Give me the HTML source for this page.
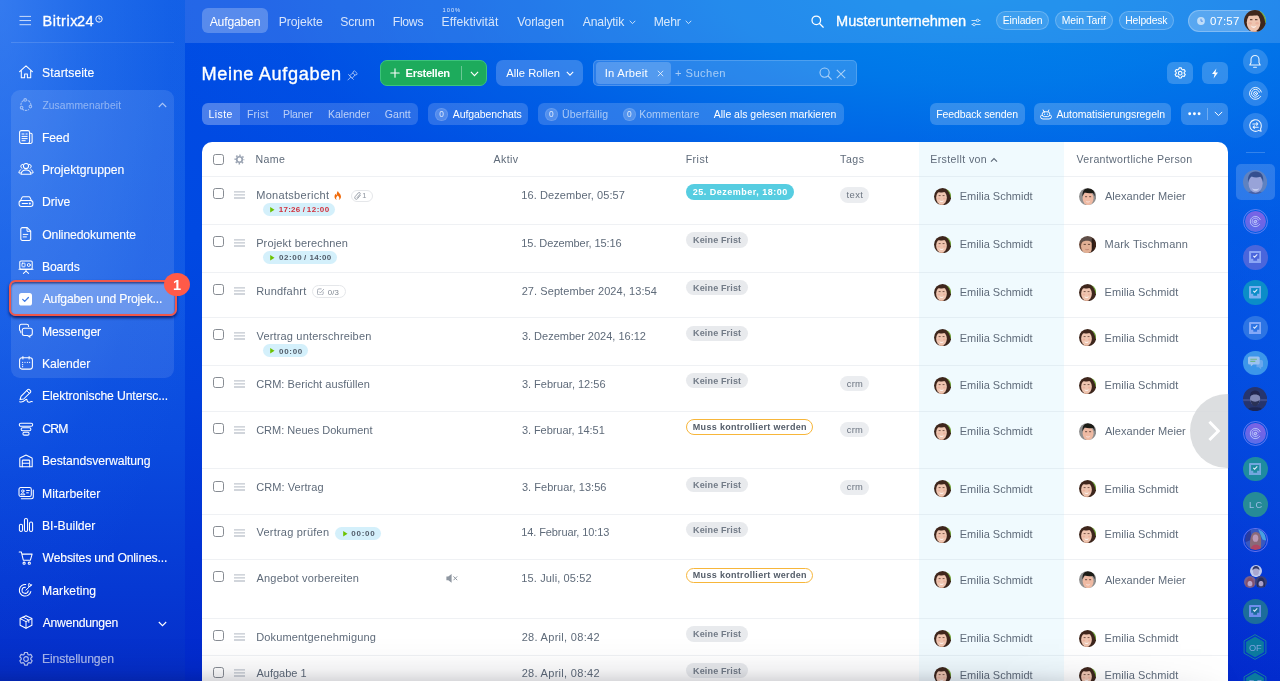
<!DOCTYPE html>
<html lang="de"><head><meta charset="utf-8"><title>Meine Aufgaben</title>
<style>
html,body{margin:0;padding:0}
body{width:1280px;height:681px;overflow:hidden;position:relative;font-family:"Liberation Sans",sans-serif;
background:#0a4fe0}
#w{position:absolute;left:0;top:0;width:1280px;height:681px;overflow:hidden;will-change:transform}
#w>div,#w>svg,#w>span{position:absolute;box-sizing:border-box}
.t{white-space:nowrap;display:block}
.abs{position:absolute}
.pill{border-radius:20px}
.av{border-radius:50%;overflow:hidden}

</style></head>
<body>
<div id="w">
<div style="left:0px;top:0px;width:1280px;height:681px;background:linear-gradient(180deg,#004ce4 0%,#0049e2 35%,#0240dc 58%,#0333d4 80%,#0229cc 100%);"></div>
<div style="left:185px;top:0px;width:1095px;height:681px;background:radial-gradient(ellipse 860px 330px at 790px -15px,rgba(0,134,235,.98) 0%,rgba(0,127,234,.85) 30%,rgba(0,112,232,.55) 58%,rgba(0,95,230,.2) 82%,rgba(0,90,230,0) 100%),radial-gradient(ellipse 620px 700px at 1330px 60px,rgba(4,108,233,.85) 0%,rgba(6,100,232,.55) 45%,rgba(10,90,230,0) 100%);"></div>
<div style="left:0px;top:0px;width:185px;height:681px;background:radial-gradient(ellipse 230px 640px at 0px 0px,rgba(75,140,245,.6) 0%,rgba(55,125,240,.36) 40%,rgba(30,100,235,.12) 75%,rgba(30,100,235,0) 100%),linear-gradient(180deg,#1260e6 0%,#1059e5 40%,#0a4ade 66%,#0639d3 86%,#052dc8 100%);"></div>
<div style="left:185px;top:0px;width:1095px;height:43px;background:rgba(255,255,255,.14);"></div>
<svg style="left:18px;top:14px;" width="14" height="12" viewBox="0 0 14 12" fill="none"><path d="M1.500 2.400h11.500M1.500 6.550h11.500M1.500 10.700h11.500" stroke="#fff" stroke-opacity=".75" stroke-width="1"/></svg>
<span class="t" style="left:42.40px;top:14.00px;font-size:14.5px;line-height:14.5px;color:#fff;letter-spacing:0.570px;-webkit-text-stroke:.3px #fff;">Bitrix</span>
<span class="t" style="left:76.90px;top:14.00px;font-size:14.5px;line-height:14.5px;color:#fff;letter-spacing:0.553px;-webkit-text-stroke:.3px #fff;">24</span>
<svg style="left:95px;top:15.2px;" width="8" height="8" viewBox="0 0 8 8" fill="none"><circle cx="4" cy="4" r="3.2" stroke="#fff" stroke-width="0.9"/><path d="M4 2.3V4h1.5" stroke="#fff" stroke-width="0.8"/></svg>
<div style="left:11px;top:42px;width:163px;height:1px;background:rgba(255,255,255,.14);"></div>
<div style="left:11px;top:90px;width:163px;height:288px;background:rgba(255,255,255,.10);border-radius:9px;"></div>
<div style="left:8.8px;top:280.4px;width:168.4px;height:35.5px;background:rgba(255,255,255,.30);border:2px solid #f0574a;border-radius:6.500px;box-shadow:0 2px 3px rgba(5,12,75,.78),inset 0 1.500px 2px rgba(5,12,75,.6);"></div>
<div style="left:164.1px;top:272.7px;width:26px;height:23.1px;background:#ff5a48;border-radius:50%;"></div>
<span class="t" style="left:172.93px;top:278.00px;font-size:14.5px;line-height:14.5px;color:#fff;font-weight:700;">1</span>
<span class="t" style="left:42.09px;top:67.00px;font-size:12.2px;line-height:12.2px;color:rgba(255,255,255,1);letter-spacing:0.089px;-webkit-text-stroke:.12px rgba(255,255,255,1);">Startseite</span>
<span class="t" style="left:42.38px;top:101.00px;font-size:10.3px;line-height:10.3px;color:rgba(255,255,255,0.45);letter-spacing:0.109px;">Zusammenarbeit</span>
<span class="t" style="left:41.99px;top:132.00px;font-size:12.2px;line-height:12.2px;color:rgba(255,255,255,1);letter-spacing:-0.118px;-webkit-text-stroke:.12px rgba(255,255,255,1);">Feed</span>
<span class="t" style="left:41.99px;top:164.00px;font-size:12.2px;line-height:12.2px;color:rgba(255,255,255,1);letter-spacing:-0.029px;-webkit-text-stroke:.12px rgba(255,255,255,1);">Projektgruppen</span>
<span class="t" style="left:41.99px;top:196.00px;font-size:12.2px;line-height:12.2px;color:rgba(255,255,255,1);letter-spacing:-0.024px;-webkit-text-stroke:.12px rgba(255,255,255,1);">Drive</span>
<span class="t" style="left:42.27px;top:229.00px;font-size:12.2px;line-height:12.2px;color:rgba(255,255,255,1);letter-spacing:-0.129px;-webkit-text-stroke:.12px rgba(255,255,255,1);">Onlinedokumente</span>
<span class="t" style="left:41.99px;top:261.00px;font-size:12.2px;line-height:12.2px;color:rgba(255,255,255,1);letter-spacing:-0.158px;-webkit-text-stroke:.12px rgba(255,255,255,1);">Boards</span>
<span class="t" style="left:42.66px;top:293.00px;font-size:12.2px;line-height:12.2px;color:rgba(255,255,255,1);letter-spacing:-0.206px;-webkit-text-stroke:.12px rgba(255,255,255,1);">Aufgaben und Projek...</span>
<span class="t" style="left:41.98px;top:326.00px;font-size:12.2px;line-height:12.2px;color:rgba(255,255,255,1);letter-spacing:-0.142px;-webkit-text-stroke:.12px rgba(255,255,255,1);">Messenger</span>
<span class="t" style="left:41.99px;top:358.00px;font-size:12.2px;line-height:12.2px;color:rgba(255,255,255,1);letter-spacing:-0.083px;-webkit-text-stroke:.12px rgba(255,255,255,1);">Kalender</span>
<span class="t" style="left:41.99px;top:390.00px;font-size:12.2px;line-height:12.2px;color:rgba(255,255,255,1);letter-spacing:-0.110px;-webkit-text-stroke:.12px rgba(255,255,255,1);">Elektronische Untersc...</span>
<span class="t" style="left:42.16px;top:423.00px;font-size:12.2px;line-height:12.2px;color:rgba(255,255,255,1);letter-spacing:-0.735px;-webkit-text-stroke:.12px rgba(255,255,255,1);">CRM</span>
<span class="t" style="left:41.99px;top:455.00px;font-size:12.2px;line-height:12.2px;color:rgba(255,255,255,1);letter-spacing:-0.071px;-webkit-text-stroke:.12px rgba(255,255,255,1);">Bestandsverwaltung</span>
<span class="t" style="left:41.98px;top:488.00px;font-size:12.2px;line-height:12.2px;color:rgba(255,255,255,1);letter-spacing:0.078px;-webkit-text-stroke:.12px rgba(255,255,255,1);">Mitarbeiter</span>
<span class="t" style="left:41.99px;top:520.00px;font-size:12.2px;line-height:12.2px;color:rgba(255,255,255,1);letter-spacing:-0.007px;-webkit-text-stroke:.12px rgba(255,255,255,1);">BI-Builder</span>
<span class="t" style="left:42.61px;top:552.00px;font-size:12.2px;line-height:12.2px;color:rgba(255,255,255,1);letter-spacing:-0.171px;-webkit-text-stroke:.12px rgba(255,255,255,1);">Websites und Onlines...</span>
<span class="t" style="left:41.98px;top:585.00px;font-size:12.2px;line-height:12.2px;color:rgba(255,255,255,1);letter-spacing:0.073px;-webkit-text-stroke:.12px rgba(255,255,255,1);">Marketing</span>
<span class="t" style="left:42.66px;top:617.00px;font-size:12.2px;line-height:12.2px;color:rgba(255,255,255,1);letter-spacing:-0.237px;-webkit-text-stroke:.12px rgba(255,255,255,1);">Anwendungen</span>
<span class="t" style="left:41.89px;top:653.00px;font-size:12.2px;line-height:12.2px;color:rgba(255,255,255,0.62);letter-spacing:-0.090px;-webkit-text-stroke:.12px rgba(255,255,255,0.62);">Einstellungen</span>
<svg style="left:17.5px;top:64.2px;" width="16" height="16" viewBox="0 0 16 16" fill="none"><g stroke="#fff" stroke-width="1.05" stroke-linecap="round" stroke-linejoin="round" opacity="1"><path d="M1.6 7.6 8 1.9l6.4 5.7M3.3 6.4v7.3h3.3V9.9h2.8v3.8h3.3V6.4"/></g></svg>
<svg style="left:17.5px;top:97.13px;" width="16" height="16" viewBox="0 0 16 16" fill="none"><g stroke="#fff" stroke-width="1.05" stroke-linecap="round" stroke-linejoin="round" opacity="0.5"><path d="M5.3 3.6A5 5 0 0 0 3 8.6M4.4 12a5 5 0 0 0 6.2.6M12.9 7.9A5 5 0 0 0 9 3.2" stroke-dasharray="1.6 1.6"/><circle cx="7.2" cy="2.9" r="1.3"/><circle cx="3.6" cy="10.6" r="1.3"/><circle cx="12.4" cy="9.6" r="1.3"/></g></svg>
<svg style="left:17.5px;top:129.46px;" width="16" height="16" viewBox="0 0 16 16" fill="none"><g stroke="#fff" stroke-width="1.05" stroke-linecap="round" stroke-linejoin="round" opacity="1"><rect x="1.6" y="1.6" width="10" height="12.8" rx="1.8"/><path d="M11.6 4.3h1.3a1.2 1.2 0 0 1 1.2 1.2v7.4a1.5 1.5 0 0 1-1.5 1.5H9"/><path d="M4 5h2M4 7.4h5.2M4 9.6h5.2M4 11.7h3.2M8 5h1.2" stroke-width="1"/></g></svg>
<svg style="left:17.5px;top:161.19px;" width="16" height="16" viewBox="0 0 16 16" fill="none"><g stroke="#fff" stroke-width="1.05" stroke-linecap="round" stroke-linejoin="round" opacity="1"><circle cx="8" cy="5" r="2.6"/><path d="M3 13.3c.2-2.7 2-4.300 5-4.300s4.800 1.600 5 4.300z"/><path d="M4.600 3.300a2.100 2.100 0 0 0-.6 4M2.900 8.600C1.700 9.200 1 10.300.9 12h1.500M11.400 3.300a2.100 2.100 0 0 1 .6 4M13.100 8.600c1.200.6 1.900 1.700 2 3.400h-1.500" stroke-width="1"/></g></svg>
<svg style="left:17.5px;top:193.52px;" width="16" height="16" viewBox="0 0 16 16" fill="none"><g stroke="#fff" stroke-width="1.05" stroke-linecap="round" stroke-linejoin="round" opacity="1"><rect x="1.100" y="6.400" width="13.800" height="6" rx="2.200"/><path d="M2.400 6.900 3.900 3.600a1.300 1.300 0 0 1 1.200-.8h5.800a1.300 1.300 0 0 1 1.200.8l1.500 3.300"/><path d="M4.200 9.400h5.300"/><circle cx="11.800" cy="9.400" r=".5" fill="#fff"/></g></svg>
<svg style="left:17.5px;top:226.35px;" width="16" height="16" viewBox="0 0 16 16" fill="none"><g stroke="#fff" stroke-width="1.05" stroke-linecap="round" stroke-linejoin="round" opacity="1"><path d="M4.300 1.600h4.900l3.500 3.500v7.800a1.500 1.500 0 0 1-1.500 1.500H4.300a1.500 1.500 0 0 1-1.500-1.500V3.100a1.500 1.500 0 0 1 1.500-1.500z"/><path d="M9 1.900v3.400h3.400" stroke-width="1"/><path d="M5.200 8.400h4.600M5.200 10.900h3.200" stroke-width="1"/></g></svg>
<svg style="left:17.5px;top:259.08px;" width="16" height="16" viewBox="0 0 16 16" fill="none"><g stroke="#fff" stroke-width="1.05" stroke-linecap="round" stroke-linejoin="round" opacity="1"><rect x="1.800" y="1.900" width="12.400" height="8.400" rx="1.200"/><path d="M1 10.300h14M8 10.300v1.900M5.400 14.400 8 12.200l2.600 2.200" /><rect x="4" y="4.200" width="3" height="3.600" rx=".4" stroke-width=".9"/><circle cx="10.800" cy="6" r="1.500" stroke-width=".9"/></g></svg>
<svg style="left:18.8px;top:292.7px;" width="13" height="13" viewBox="0 0 13 13" fill="none"><rect x="0" y="0" width="13" height="12.600" rx="2.600" fill="#fff"/><path d="M3.700 6.400 5.700 8.400 9.400 4.500" stroke="#3f7be6" stroke-width="1.300" fill="none" stroke-linecap="round" stroke-linejoin="round"/></svg>
<svg style="left:17.5px;top:323.24px;" width="16" height="16" viewBox="0 0 16 16" fill="none"><g stroke="#fff" stroke-width="1.05" stroke-linecap="round" stroke-linejoin="round" opacity="1"><path d="M6.300 5.200h6a2 2 0 0 1 2 2v3.300a2 2 0 0 1-2 2h-.4v1.700l-2.200-1.700H6.300a2 2 0 0 1-2-2V7.200a2 2 0 0 1 2-2z"/><path d="M10.600 3.400v-.2a1.900 1.900 0 0 0-1.900-1.900H3.400a1.900 1.900 0 0 0-1.900 1.900V6.400a1.900 1.900 0 0 0 1.300 1.800v1.500" /></g></svg>
<svg style="left:17.5px;top:355.17px;" width="16" height="16" viewBox="0 0 16 16" fill="none"><g stroke="#fff" stroke-width="1.05" stroke-linecap="round" stroke-linejoin="round" opacity="1"><rect x="1.600" y="2.800" width="12.800" height="11.300" rx="2.300"/><path d="M4.900 1.500v2.400M11.100 1.500v2.400"/><path d="M4.600 7.300h.01M7 7.300h.01M9.400 7.300h.01M11.600 7.300h.01M4.600 9.700h.01M4.600 11.700h.01" stroke-width="1.250"/></g></svg>
<svg style="left:17.5px;top:387.9px;" width="16" height="16" viewBox="0 0 16 16" fill="none"><g stroke="#fff" stroke-width="1.05" stroke-linecap="round" stroke-linejoin="round" opacity="1"><path d="M2 11.600 3 8.300l6.700-6.600a1.200 1.200 0 0 1 1.700 0l1 1a1.200 1.200 0 0 1 0 1.700L5.700 11z"/><path d="M8.800 2.700l2.700 2.700" stroke-width="1"/><path d="M1.700 13.700c2.200.8 4.300-.6 5.700-1.900.9-.8 1.900-.4 1.700.6-.2 1 1 2.200 2.800 1.600 1.100-.4 1.600-1 2.400-.300" stroke-width="1.050"/></g></svg>
<svg style="left:17.5px;top:420.53px;" width="16" height="16" viewBox="0 0 16 16" fill="none"><g stroke="#fff" stroke-width="1.05" stroke-linecap="round" stroke-linejoin="round" opacity="1"><rect x="1.300" y="2.200" width="13.400" height="3" rx="1.500"/><rect x="3.100" y="6.700" width="9.800" height="3" rx="1.500"/><rect x="4.900" y="11.200" width="6.200" height="2.900" rx="1.450"/></g></svg>
<svg style="left:17.5px;top:452.56px;" width="16" height="16" viewBox="0 0 16 16" fill="none"><g stroke="#fff" stroke-width="1.05" stroke-linecap="round" stroke-linejoin="round" opacity="1"><path d="M1.800 13.800V5.700a1 1 0 0 1 .6-.9l5.200-2.600a1 1 0 0 1 .8 0l5.200 2.600a1 1 0 0 1 .6.900v8.100z"/><path d="M4.300 13.800V7.800a.7.700 0 0 1 .7-.7h6a.7.700 0 0 1 .7.700v6M4.300 10.300h7.400" stroke-width="1.050"/></g></svg>
<svg style="left:17.5px;top:485.29px;" width="16" height="16" viewBox="0 0 16 16" fill="none"><g stroke="#fff" stroke-width="1.05" stroke-linecap="round" stroke-linejoin="round" opacity="1"><rect x="1" y="2.500" width="12.300" height="9" rx="1.700"/><path d="M3.300 13.700h10a2 2 0 0 0 2-2V5"/><circle cx="4.800" cy="6" r="1.200" stroke-width=".95"/><path d="M2.900 9.400c.3-1 1-1.400 1.900-1.400s1.600.4 1.900 1.400z" stroke-width=".95"/><path d="M8.600 5.500h2.800M8.600 7.800h1.800" stroke-width="1"/></g></svg>
<svg style="left:17.5px;top:517.12px;" width="16" height="16" viewBox="0 0 16 16" fill="none"><g stroke="#fff" stroke-width="1.05" stroke-linecap="round" stroke-linejoin="round" opacity="1"><rect x="1.400" y="7.200" width="3.100" height="7.200" rx="1.500"/><rect x="6.450" y="1.500" width="3.100" height="12.900" rx="1.500"/><rect x="11.500" y="5" width="3.100" height="9.400" rx="1.500"/></g></svg>
<svg style="left:17.5px;top:549.75px;" width="16" height="16" viewBox="0 0 16 16" fill="none"><g stroke="#fff" stroke-width="1.05" stroke-linecap="round" stroke-linejoin="round" opacity="1"><path d="M1.200 1.900h2.100l2 8.300h7.100l1.700-6.100H4.100"/><circle cx="6.100" cy="13.200" r="1.100"/><circle cx="11.300" cy="13.200" r="1.100"/></g></svg>
<svg style="left:17.5px;top:581.58px;" width="16" height="16" viewBox="0 0 16 16" fill="none"><g stroke="#fff" stroke-width="1.05" stroke-linecap="round" stroke-linejoin="round" opacity="1"><path d="M12.800 9.600A5.800 5.800 0 1 1 7.800 2.500"/><path d="M10.200 8.700a3.100 3.100 0 1 1-2.700-3.500"/><path d="M7.900 8.200 12.600 3.500M10.700 2.900l.4-1.600 1.300 1.300 1.400.2-1.100 1.300-1.700.3z" stroke-width="1"/></g></svg>
<svg style="left:17.5px;top:614.31px;" width="16" height="16" viewBox="0 0 16 16" fill="none"><g stroke="#fff" stroke-width="1.05" stroke-linecap="round" stroke-linejoin="round" opacity="1"><path d="M8 1.700 13.900 4.500v6.800L8 14.300 2.100 11.300V4.500z"/><path d="M2.300 4.700 8 7.600l5.700-2.900M8 7.600v6.500M5 3.200l5.800 2.900v2.300" stroke-width="1"/></g></svg>
<svg style="left:17.5px;top:650.7px;" width="16" height="16" viewBox="0 0 16 16" fill="none"><g stroke="#fff" stroke-width="1.200" opacity=".7" stroke-linejoin="round"><path d="M6.600 1.500h2.800l.5 1.900 1 .6 1.900-.6 1.400 2.400-1.400 1.400v1.200l1.400 1.400-1.400 2.400-1.900-.6-1 .6-.5 1.900H6.600l-.5-1.900-1-.6-1.900.6-1.400-2.400 1.400-1.400V7.200L1.800 5.800l1.400-2.400 1.900.6 1-.6z"/><circle cx="8" cy="8" r="2.300"/></g></svg>
<svg style="left:157.5px;top:101.5px;" width="9" height="6" viewBox="0 0 9 6" fill="none"><path d="M.8 5 4.500 1.300 8.200 5" stroke="rgba(255,255,255,.6)" stroke-width="1.100"/></svg>
<svg style="left:157.5px;top:620.5px;" width="9" height="6" viewBox="0 0 9 6" fill="none"><path d="M.8 1 4.500 4.700 8.200 1" stroke="#fff" stroke-width="1.100"/></svg>
<div style="left:202px;top:8px;width:66px;height:25px;background:rgba(255,255,255,.24);border-radius:6px;"></div>
<span class="t" style="left:209.70px;top:16.00px;font-size:12.2px;line-height:12.2px;color:#fff;letter-spacing:-0.196px;">Aufgaben</span>
<span class="t" style="left:278.64px;top:16.00px;font-size:12.2px;line-height:12.2px;color:rgba(255,255,255,.82);letter-spacing:-0.083px;">Projekte</span>
<span class="t" style="left:340.21px;top:16.00px;font-size:12.2px;line-height:12.2px;color:rgba(255,255,255,.82);letter-spacing:-0.139px;">Scrum</span>
<span class="t" style="left:392.74px;top:16.00px;font-size:12.2px;line-height:12.2px;color:rgba(255,255,255,.82);letter-spacing:-0.264px;">Flows</span>
<span class="t" style="left:441.54px;top:16.00px;font-size:12.2px;line-height:12.2px;color:rgba(255,255,255,.82);letter-spacing:0.070px;">Effektivität</span>
<span class="t" style="left:442.45px;top:8.00px;font-size:5.8px;line-height:5.8px;color:rgba(255,255,255,.82);letter-spacing:0.998px;">100%</span>
<span class="t" style="left:517.34px;top:16.00px;font-size:12.2px;line-height:12.2px;color:rgba(255,255,255,.82);letter-spacing:-0.207px;">Vorlagen</span>
<span class="t" style="left:582.70px;top:16.00px;font-size:12.2px;line-height:12.2px;color:rgba(255,255,255,.82);letter-spacing:-0.161px;">Analytik</span>
<span class="t" style="left:653.74px;top:16.00px;font-size:12.2px;line-height:12.2px;color:rgba(255,255,255,.82);letter-spacing:-0.266px;">Mehr</span>
<svg style="left:628.5px;top:19.5px;" width="7" height="5" viewBox="0 0 7 5" fill="none"><path d="M.7.8 3.500 3.600 6.300.8" stroke="rgba(255,255,255,.75)" stroke-width="1"/></svg>
<svg style="left:684.8px;top:19.5px;" width="7" height="5" viewBox="0 0 7 5" fill="none"><path d="M.7.8 3.500 3.600 6.300.8" stroke="rgba(255,255,255,.75)" stroke-width="1"/></svg>
<svg style="left:811px;top:15px;" width="13" height="13" viewBox="0 0 13 13" fill="none"><circle cx="5.300" cy="5.300" r="4.300" stroke="#fff" stroke-width="1.250"/><path d="M8.500 8.500 12.200 12.200" stroke="#fff" stroke-width="1.250" stroke-linecap="round"/></svg>
<span class="t" style="left:836.00px;top:14.00px;font-size:14.6px;line-height:14.6px;color:#fff;letter-spacing:-0.027px;-webkit-text-stroke:.3px #fff;">Musterunternehmen</span>
<svg style="left:971px;top:17.5px;" width="10" height="9" viewBox="0 0 10 9" fill="none"><g stroke="rgba(255,255,255,.8)" stroke-width=".9"><path d="M.5 2.500h5M8 2.500h1.500M.5 6.500h1.500M4.500 6.500h5"/><circle cx="6.600" cy="2.500" r="1.300"/><circle cx="3.100" cy="6.500" r="1.300"/></g></svg>
<div style="left:996px;top:11px;width:53px;height:19px;background:rgba(255,255,255,.12);border:1px solid rgba(255,255,255,.22);border-radius:10px;"></div>
<span class="t" style="left:1002.72px;top:16.00px;font-size:10.4px;line-height:10.4px;color:#fff;letter-spacing:-0.103px;">Einladen</span>
<div style="left:1055px;top:11px;width:58px;height:19px;background:rgba(255,255,255,.12);border:1px solid rgba(255,255,255,.22);border-radius:10px;"></div>
<span class="t" style="left:1061.69px;top:16.00px;font-size:10.4px;line-height:10.4px;color:#fff;letter-spacing:-0.080px;">Mein Tarif</span>
<div style="left:1119px;top:11px;width:55px;height:19px;background:rgba(255,255,255,.12);border:1px solid rgba(255,255,255,.22);border-radius:10px;"></div>
<span class="t" style="left:1125.22px;top:16.00px;font-size:10.4px;line-height:10.4px;color:#fff;letter-spacing:-0.144px;">Helpdesk</span>
<div style="left:1188px;top:10px;width:78px;height:22px;background:rgba(255,255,255,.24);border:1px solid rgba(255,255,255,.25);border-radius:11px;"></div>
<svg style="left:1197px;top:17px;" width="8" height="8" viewBox="0 0 8 8" fill="none"><circle cx="4" cy="4" r="3.900" fill="rgba(255,255,255,.62)"/><path d="M4 1.800V4.200h1.900" stroke="#4a8be8" stroke-width=".9"/></svg>
<span class="t" style="left:1209.91px;top:16.00px;font-size:11.5px;line-height:11.5px;color:#fff;letter-spacing:0.151px;">07:57</span>
<svg style="left:0;top:0" width="0" height="0"><defs><filter id="bl" x="-10%" y="-10%" width="120%" height="120%"><feGaussianBlur stdDeviation=".45"/></filter><clipPath id="cc"><circle cx="8.500" cy="8.500" r="8.500"/></clipPath></defs></svg>
<svg style="left:1244px;top:10px" width="22" height="22" viewBox="0 0 17 17"><g clip-path="url(#cc)"><g filter="url(#bl)"><rect x="-2" y="-2" width="21" height="21" fill="#3d261d"/><path d="M12 -1h7v10.500l-2.500.5C16 6.500 14.500 3 12 1z" fill="#74a63c"/><ellipse cx="7.400" cy="9.700" rx="5.300" ry="7" fill="#efc5b0"/><path d="M1 8.500C.8 3.500 3.500.7 8 .7c4.500 0 6.700 2.800 6.400 8-1.200-1.700-2.200-3.400-2.800-5C9.500 4.400 6 4.500 3.700 4.200 2.600 5.200 1.600 6.800 1 8.500z" fill="#3f281e"/><ellipse cx="4.800" cy="10.300" rx="1.300" ry="1" fill="#e8a794" opacity=".6"/><ellipse cx="10.200" cy="10.300" rx="1.300" ry="1" fill="#e8a794" opacity=".6"/><path d="M4.600 7.500h1.900M8.500 7.500h1.900" stroke="#6b4a3e" stroke-width=".9"/><path d="M5.300 12c1.400 1 3.100 1 4.400 0-.4 1.300-1.200 1.900-2.200 1.900S5.700 13.300 5.300 12z" fill="#fbeee9"/><path d="M2 18c.8-1.500 2.500-2 5-2s3.500.5 4.500 2z" fill="#dba68c"/></g></g></svg>
<span class="t" style="left:201.45px;top:65.00px;font-size:18.2px;line-height:18.2px;color:#fff;letter-spacing:0.629px;-webkit-text-stroke:.35px #fff;">Meine Aufgaben</span>
<svg style="left:347.2px;top:70px;" width="11" height="11" viewBox="0 0 11 11" fill="none"><g stroke="rgba(255,255,255,.6)" stroke-width=".95" stroke-linejoin="round" stroke-linecap="round"><path d="M1.500 4.500 6.400 9.400M2.700 5.700 5.800 3 7.900 5.100 5.200 8.200M5.800 3 6.600 1.200a.7.700 0 0 1 1.100-.2l2.400 2.400a.7.700 0 0 1-.2 1.100L7.900 5.100M3.800 7.100.9 10"/></g></svg>
<div style="left:380px;top:60px;width:107px;height:26px;background:#1dab5c;border:1px solid #3cc47c;border-radius:7px;"></div>
<div style="left:460.5px;top:66px;width:1px;height:14px;background:rgba(255,255,255,.35);"></div>
<svg style="left:390px;top:68px;" width="10" height="10" viewBox="0 0 10 10" fill="none"><path d="M5 .8v8.400M.8 5h8.400" stroke="#fff" stroke-width="1.100" stroke-linecap="round"/></svg>
<span class="t" style="left:405.61px;top:68.00px;font-size:11.2px;line-height:11.2px;color:#fff;font-weight:700;letter-spacing:-0.348px;">Erstellen</span>
<svg style="left:469.5px;top:70.5px;" width="9" height="6" viewBox="0 0 9 6" fill="none"><path d="M.9.900 4.500 4.600 8.100.9" stroke="#fff" stroke-width="1.150"/></svg>
<div style="left:496px;top:60px;width:87px;height:26px;background:rgba(255,255,255,.2);border-radius:7px;"></div>
<span class="t" style="left:506.37px;top:68.00px;font-size:11.2px;line-height:11.2px;color:#fff;letter-spacing:0.022px;">Alle Rollen</span>
<svg style="left:565.8px;top:71px;" width="8" height="6" viewBox="0 0 8 6" fill="none"><path d="M.8.900 4 4.100 7.200.9" stroke="#fff" stroke-width="1.100"/></svg>
<div style="left:593px;top:60px;width:264px;height:26px;background:rgba(255,255,255,.16);border:1px solid rgba(255,255,255,.17);border-radius:5px;"></div>
<div style="left:595.5px;top:62.2px;width:75.3px;height:22px;background:rgba(255,255,255,.20);border-radius:4px;"></div>
<span class="t" style="left:604.73px;top:68.00px;font-size:11.2px;line-height:11.2px;color:#fff;letter-spacing:0.220px;">In Arbeit</span>
<svg style="left:656.5px;top:70.3px;" width="7" height="7" viewBox="0 0 7 7" fill="none"><path d="M.8.800 6.200 6.200M6.200.8.800 6.200" stroke="rgba(255,255,255,.75)" stroke-width=".95"/></svg>
<span class="t" style="left:675.04px;top:68.00px;font-size:11.2px;line-height:11.2px;color:rgba(255,255,255,.58);letter-spacing:0.423px;">+ Suchen</span>
<svg style="left:819px;top:67px;" width="14" height="14" viewBox="0 0 14 14" fill="none"><circle cx="5.600" cy="5.600" r="4.600" stroke="rgba(255,255,255,.6)" stroke-width="1.100"/><path d="M9 9 12.600 12.600" stroke="rgba(255,255,255,.6)" stroke-width="1.100"/></svg>
<svg style="left:836.3px;top:68.5px;" width="10" height="10" viewBox="0 0 10 10" fill="none"><path d="M.8.800 9.200 9.200M9.200.8.800 9.200" stroke="rgba(255,255,255,.6)" stroke-width="1.050"/></svg>
<div style="left:1167px;top:62px;width:26px;height:22px;background:rgba(255,255,255,.2);border-radius:6px;"></div>
<svg style="left:1173.8px;top:66.8px;" width="12.4" height="12.4" viewBox="0 0 11 11" fill="none"><g stroke="#fff" stroke-width=".95" stroke-linejoin="round"><path d="M4.500.8h2l.4 1.300.8.450 1.300-.4 1 1.700-1 .95v.9l1 .95-1 1.700-1.300-.4-.8.450-.4 1.300h-2l-.4-1.300-.8-.450-1.300.4-1-1.700 1-.95v-.9l-1-.95 1-1.700 1.300.4.8-.450z"/><circle cx="5.500" cy="5.500" r="1.600"/></g></svg>
<div style="left:1202px;top:62px;width:26px;height:22px;background:rgba(255,255,255,.2);border-radius:6px;"></div>
<svg style="left:1211px;top:67.5px;" width="8" height="11" viewBox="0 0 8 11" fill="none"><path d="M5.400.5 1 6h2.600L2.600 10.500 7 4.600H4.400z" fill="#fff"/></svg>
<div style="left:202px;top:103px;width:216px;height:21.5px;background:rgba(255,255,255,.16);border-radius:6px;"></div>
<div style="left:202px;top:103px;width:38px;height:21.5px;background:rgba(255,255,255,.16);border-radius:6px 0 0 6px;"></div>
<span class="t" style="left:208.60px;top:109.00px;font-size:10.5px;line-height:10.5px;color:#fff;letter-spacing:0.382px;">Liste</span>
<span class="t" style="left:246.97px;top:109.00px;font-size:10.5px;line-height:10.5px;color:rgba(255,255,255,.68);letter-spacing:0.236px;">Frist</span>
<span class="t" style="left:283.04px;top:109.00px;font-size:10.5px;line-height:10.5px;color:rgba(255,255,255,.68);letter-spacing:-0.142px;">Planer</span>
<span class="t" style="left:328.05px;top:109.00px;font-size:10.5px;line-height:10.5px;color:rgba(255,255,255,.68);letter-spacing:-0.024px;">Kalender</span>
<span class="t" style="left:384.83px;top:109.00px;font-size:10.5px;line-height:10.5px;color:rgba(255,255,255,.68);letter-spacing:0.048px;">Gantt</span>
<div style="left:428px;top:103px;width:100px;height:21.5px;background:rgba(255,255,255,.17);border-radius:6px;"></div>
<div style="left:435.3px;top:108px;width:12.5px;height:12.5px;background:rgba(255,255,255,.19);border:1px solid rgba(255,255,255,.1);border-radius:50%;"></div>
<span class="t" style="left:439.32px;top:110.00px;font-size:8.4px;line-height:8.4px;color:rgba(255,255,255,.8);">0</span>
<span class="t" style="left:452.75px;top:109.00px;font-size:10.5px;line-height:10.5px;color:#fff;letter-spacing:-0.087px;">Aufgabenchats</span>
<div style="left:537.5px;top:103px;width:306.3px;height:21.5px;background:rgba(255,255,255,.17);border-radius:6px;"></div>
<div style="left:545px;top:108px;width:12.5px;height:12.5px;background:rgba(255,255,255,.19);border:1px solid rgba(255,255,255,.1);border-radius:50%;"></div>
<span class="t" style="left:549.00px;top:110.00px;font-size:8.4px;line-height:8.4px;color:rgba(255,255,255,.8);">0</span>
<span class="t" style="left:561.97px;top:109.00px;font-size:10.5px;line-height:10.5px;color:rgba(255,255,255,.6);letter-spacing:0.210px;">Überfällig</span>
<div style="left:623px;top:108px;width:12.5px;height:12.5px;background:rgba(255,255,255,.19);border:1px solid rgba(255,255,255,.1);border-radius:50%;"></div>
<span class="t" style="left:627.00px;top:110.00px;font-size:8.4px;line-height:8.4px;color:rgba(255,255,255,.8);">0</span>
<span class="t" style="left:639.22px;top:109.00px;font-size:10.5px;line-height:10.5px;color:rgba(255,255,255,.6);letter-spacing:-0.009px;">Kommentare</span>
<span class="t" style="left:713.85px;top:109.00px;font-size:10.5px;line-height:10.5px;color:#fff;letter-spacing:-0.029px;">Alle als gelesen markieren</span>
<div style="left:930px;top:103px;width:94.5px;height:21.5px;background:rgba(255,255,255,.2);border-radius:6px;"></div>
<span class="t" style="left:936.21px;top:109.00px;font-size:10.5px;line-height:10.5px;color:#fff;letter-spacing:-0.111px;">Feedback senden</span>
<div style="left:1033.8px;top:103px;width:137.5px;height:21.5px;background:rgba(255,255,255,.2);border-radius:6px;"></div>
<svg style="left:1039.5px;top:108.5px;" width="12" height="11" viewBox="0 0 12 11" fill="none"><g stroke="#fff" stroke-width=".95" stroke-linecap="round"><path d="M3.200 1 4 2.800M8.800 1 8 2.800"/><rect x="2.200" y="2.800" width="7.600" height="4.800" rx="2.200"/><path d="M2.200 6.400H1.600A1.100 1.100 0 0 0 .5 7.500 2.500 2.500 0 0 0 3 10h6a2.500 2.500 0 0 0 2.500-2.500 1.100 1.100 0 0 0-1.100-1.100H9.800"/><path d="M4.600 5.200h.01M7.400 5.200h.01" stroke-width="1.200"/></g></svg>
<span class="t" style="left:1056.41px;top:109.00px;font-size:10.5px;line-height:10.5px;color:#fff;letter-spacing:-0.083px;">Automatisierungsregeln</span>
<div style="left:1180.8px;top:103px;width:47.5px;height:21.5px;background:rgba(255,255,255,.2);border-radius:6px;"></div>
<div style="left:1207px;top:107.5px;width:1px;height:12.5px;background:rgba(255,255,255,.3);"></div>
<svg style="left:1187.5px;top:112px;" width="13" height="4" viewBox="0 0 13 4" fill="none"><circle cx="1.700" cy="1.800" r="1.450" fill="#fff"/><circle cx="6.400" cy="1.800" r="1.450" fill="#fff"/><circle cx="11.100" cy="1.800" r="1.450" fill="#fff"/></svg>
<svg style="left:1214.3px;top:111.3px;" width="9" height="6" viewBox="0 0 9 6" fill="none"><path d="M.8.900 4.500 4.600 8.200.9" stroke="#fff" stroke-width="1"/></svg>
<div style="left:202px;top:142px;width:1026px;height:560px;background:#fff;border-radius:10px 10px 0 0;"></div>
<div style="left:919px;top:142px;width:145px;height:560px;background:#f0fafe;"></div>
<div style="left:213.1px;top:153.8px;width:11.2px;height:11px;border:1.150px solid #878c93;border-radius:2.600px;background:#fff;"></div>
<svg style="left:233.5px;top:153.5px;" width="11" height="11" viewBox="0 0 11 11" fill="none"><circle cx="5.500" cy="5.500" r="2.750" stroke="#9aa3b2" stroke-width="1.700"/><circle cx="5.500" cy="5.500" r="4.250" stroke="#9aa3b2" stroke-width="1.500" stroke-dasharray="1.500 1.838" stroke-dashoffset=".75"/></svg>
<span class="t" style="left:255.59px;top:154.00px;font-size:10.6px;line-height:10.6px;color:#5f6b7a;letter-spacing:0.364px;">Name</span>
<span class="t" style="left:493.41px;top:154.00px;font-size:10.6px;line-height:10.6px;color:#5f6b7a;letter-spacing:0.437px;">Aktiv</span>
<span class="t" style="left:685.69px;top:154.00px;font-size:10.6px;line-height:10.6px;color:#5f6b7a;letter-spacing:0.463px;">Frist</span>
<span class="t" style="left:840.06px;top:154.00px;font-size:10.6px;line-height:10.6px;color:#5f6b7a;letter-spacing:0.563px;">Tags</span>
<span class="t" style="left:930.19px;top:154.00px;font-size:10.6px;line-height:10.6px;color:#5f6b7a;letter-spacing:0.377px;">Erstellt von</span>
<svg style="left:989.5px;top:156.5px;" width="8" height="6" viewBox="0 0 8 6" fill="none"><path d="M1 4.600 4 1.600 7 4.600" stroke="#5f6b7a" stroke-width="1.150"/></svg>
<span class="t" style="left:1076.55px;top:154.00px;font-size:10.6px;line-height:10.6px;color:#5f6b7a;letter-spacing:0.319px;">Verantwortliche Person</span>
<div style="left:202px;top:175.8px;width:1026px;height:1px;background:#eff1f4;"></div>
<div style="left:919px;top:175.8px;width:145px;height:1px;background:#e3eef4;"></div>
<div style="left:202px;top:223.9px;width:1026px;height:1px;background:#eff1f4;"></div>
<div style="left:919px;top:223.9px;width:145px;height:1px;background:#e3eef4;"></div>
<div style="left:202px;top:271.8px;width:1026px;height:1px;background:#eff1f4;"></div>
<div style="left:919px;top:271.8px;width:145px;height:1px;background:#e3eef4;"></div>
<div style="left:202px;top:317.1px;width:1026px;height:1px;background:#eff1f4;"></div>
<div style="left:919px;top:317.1px;width:145px;height:1px;background:#e3eef4;"></div>
<div style="left:202px;top:364.7px;width:1026px;height:1px;background:#eff1f4;"></div>
<div style="left:919px;top:364.7px;width:145px;height:1px;background:#e3eef4;"></div>
<div style="left:202px;top:410.7px;width:1026px;height:1px;background:#eff1f4;"></div>
<div style="left:919px;top:410.7px;width:145px;height:1px;background:#e3eef4;"></div>
<div style="left:202px;top:468.4px;width:1026px;height:1px;background:#eff1f4;"></div>
<div style="left:919px;top:468.4px;width:145px;height:1px;background:#e3eef4;"></div>
<div style="left:202px;top:513.7px;width:1026px;height:1px;background:#eff1f4;"></div>
<div style="left:919px;top:513.7px;width:145px;height:1px;background:#e3eef4;"></div>
<div style="left:202px;top:559.0px;width:1026px;height:1px;background:#eff1f4;"></div>
<div style="left:919px;top:559.0px;width:145px;height:1px;background:#e3eef4;"></div>
<div style="left:202px;top:617.9px;width:1026px;height:1px;background:#eff1f4;"></div>
<div style="left:919px;top:617.9px;width:145px;height:1px;background:#e3eef4;"></div>
<div style="left:202px;top:654.6px;width:1026px;height:1px;background:#eff1f4;"></div>
<div style="left:919px;top:654.6px;width:145px;height:1px;background:#e3eef4;"></div>
<div style="left:213.1px;top:187.9px;width:11.2px;height:11px;border:1.150px solid #878c93;border-radius:2.600px;background:#fff;"></div>
<svg style="left:234.1px;top:190.6px;" width="11" height="8" viewBox="0 0 11 8" fill="none"><path d="M0 .8h11M0 3.900h11M0 7h11" stroke="#c2c7cf" stroke-width="1.300"/></svg>
<span class="t" style="left:256.17px;top:190.00px;font-size:11px;line-height:11px;color:#5f6b7a;letter-spacing:0.312px;">Monatsbericht</span>
<span class="t" style="left:521.37px;top:190.00px;font-size:11px;line-height:11px;color:#5f6b7a;letter-spacing:0.078px;">16. Dezember, 05:57</span>
<div style="left:686px;top:184.3px;width:108.3px;height:15.5px;background:#56cde1;border-radius:8px;"></div>
<span class="t" style="left:692.76px;top:188.00px;font-size:9px;line-height:9px;color:#fff;font-weight:700;letter-spacing:0.496px;">25. Dezember, 18:00</span>
<div style="left:840.2px;top:187.0px;width:29px;height:15.6px;background:#ebedf0;border-radius:8px;"></div>
<span class="t" style="left:846.60px;top:190.00px;font-size:9.4px;line-height:9.4px;color:#6b7480;letter-spacing:0.370px;">text</span>
<svg style="left:934px;top:187.8px" width="17.2" height="17.2" viewBox="0 0 17 17"><g clip-path="url(#cc)"><g filter="url(#bl)"><rect x="-2" y="-2" width="21" height="21" fill="#3d261d"/><path d="M12 -1h7v10.500l-2.500.5C16 6.500 14.500 3 12 1z" fill="#74a63c"/><ellipse cx="7.400" cy="9.700" rx="5.300" ry="7" fill="#efc5b0"/><path d="M1 8.500C.8 3.500 3.500.7 8 .7c4.500 0 6.700 2.800 6.400 8-1.200-1.700-2.200-3.400-2.800-5C9.500 4.400 6 4.500 3.700 4.200 2.600 5.200 1.600 6.800 1 8.500z" fill="#3f281e"/><ellipse cx="4.800" cy="10.300" rx="1.300" ry="1" fill="#e8a794" opacity=".6"/><ellipse cx="10.200" cy="10.300" rx="1.300" ry="1" fill="#e8a794" opacity=".6"/><path d="M4.600 7.500h1.900M8.500 7.500h1.900" stroke="#6b4a3e" stroke-width=".9"/><path d="M5.300 12c1.400 1 3.100 1 4.400 0-.4 1.300-1.200 1.900-2.200 1.900S5.700 13.300 5.300 12z" fill="#fbeee9"/><path d="M2 18c.8-1.500 2.500-2 5-2s3.500.5 4.500 2z" fill="#dba68c"/></g></g></svg>
<span class="t" style="left:959.74px;top:191.00px;font-size:11px;line-height:11px;color:#5f6b7a;letter-spacing:0.012px;">Emilia Schmidt</span>
<svg style="left:1079px;top:187.8px" width="17.2" height="17.2" viewBox="0 0 17 17"><g clip-path="url(#cc)"><g filter="url(#bl)"><rect x="-2" y="-2" width="21" height="21" fill="#8f8f8f"/><ellipse cx="9" cy="10.200" rx="5.400" ry="6.800" fill="#efbaa3"/><path d="M3.500 8.500C3 3.500 5 .2 9.300.2s6.700 3 6.200 8.300c-.5-1.600-1-2.800-1.700-3.600-2.600.6-5.500.5-8.200-.4-.9 1-1.600 2.300-2.100 4z" fill="#1f1a18"/><path d="M6 8.600h2M10 8.600h2" stroke="#5d4035" stroke-width=".9"/><path d="M6.700 12.600c1.400.9 3 .9 4.400 0-.4 1.300-1.200 1.800-2.200 1.800s-1.800-.5-2.200-1.800z" fill="#f6dcd6"/></g></g></svg>
<span class="t" style="left:1104.96px;top:191.00px;font-size:11px;line-height:11px;color:#5f6b7a;letter-spacing:0.052px;">Alexander Meier</span>
<div style="left:213.1px;top:236.0px;width:11.2px;height:11px;border:1.150px solid #878c93;border-radius:2.600px;background:#fff;"></div>
<svg style="left:234.1px;top:238.7px;" width="11" height="8" viewBox="0 0 11 8" fill="none"><path d="M0 .8h11M0 3.900h11M0 7h11" stroke="#c2c7cf" stroke-width="1.300"/></svg>
<span class="t" style="left:256.13px;top:238.00px;font-size:11px;line-height:11px;color:#5f6b7a;letter-spacing:0.161px;">Projekt berechnen</span>
<span class="t" style="left:521.37px;top:238.00px;font-size:11px;line-height:11px;color:#5f6b7a;letter-spacing:-0.105px;">15. Dezember, 15:16</span>
<div style="left:686px;top:232.4px;width:62px;height:15.2px;background:#e8eaed;border-radius:8px;"></div>
<span class="t" style="left:693.08px;top:236.00px;font-size:9px;line-height:9px;color:#727b87;font-weight:700;letter-spacing:0.145px;">Keine Frist</span>
<svg style="left:934px;top:235.9px" width="17.2" height="17.2" viewBox="0 0 17 17"><g clip-path="url(#cc)"><g filter="url(#bl)"><rect x="-2" y="-2" width="21" height="21" fill="#3d261d"/><path d="M12 -1h7v10.500l-2.500.5C16 6.500 14.500 3 12 1z" fill="#74a63c"/><ellipse cx="7.400" cy="9.700" rx="5.300" ry="7" fill="#efc5b0"/><path d="M1 8.500C.8 3.500 3.500.7 8 .7c4.500 0 6.700 2.800 6.400 8-1.200-1.700-2.200-3.400-2.800-5C9.500 4.400 6 4.500 3.700 4.200 2.600 5.200 1.600 6.800 1 8.500z" fill="#3f281e"/><ellipse cx="4.800" cy="10.300" rx="1.300" ry="1" fill="#e8a794" opacity=".6"/><ellipse cx="10.200" cy="10.300" rx="1.300" ry="1" fill="#e8a794" opacity=".6"/><path d="M4.600 7.500h1.900M8.500 7.500h1.900" stroke="#6b4a3e" stroke-width=".9"/><path d="M5.300 12c1.400 1 3.100 1 4.400 0-.4 1.300-1.200 1.900-2.200 1.900S5.700 13.300 5.300 12z" fill="#fbeee9"/><path d="M2 18c.8-1.500 2.500-2 5-2s3.500.5 4.500 2z" fill="#dba68c"/></g></g></svg>
<span class="t" style="left:959.74px;top:239.00px;font-size:11px;line-height:11px;color:#5f6b7a;letter-spacing:0.012px;">Emilia Schmidt</span>
<svg style="left:1079px;top:235.9px" width="17.2" height="17.2" viewBox="0 0 17 17"><g clip-path="url(#cc)"><g filter="url(#bl)"><rect x="-2" y="-2" width="21" height="21" fill="#6a4a3a"/><rect x="12.300" y="-2" width="7" height="21" fill="#3a2419"/><ellipse cx="7.800" cy="10.200" rx="5.800" ry="6.900" fill="#e2b095"/><path d="M1 8.500C.8 3.500 3.500 .3 8 .3s6 2.500 5.500 6.700C12 5.800 10.500 5 9 4.800 6.500 4.600 4 5.200 2.800 6.200 2 6.800 1.400 7.500 1 8.500z" fill="#5f5048"/><rect x="12.600" y="3" width="1.800" height="13" fill="#2a1a12"/><path d="M4.600 8.300h2.200M8.800 8.300h2.200" stroke="#5a3c30" stroke-width=".9"/><path d="M6.300 13.200c1 .5 2.400.5 3.400 0" stroke="#b97e6a" stroke-width=".8" fill="none"/></g></g></svg>
<span class="t" style="left:1104.51px;top:239.00px;font-size:11px;line-height:11px;color:#5f6b7a;letter-spacing:0.215px;">Mark Tischmann</span>
<div style="left:213.1px;top:283.9px;width:11.2px;height:11px;border:1.150px solid #878c93;border-radius:2.600px;background:#fff;"></div>
<svg style="left:234.1px;top:286.6px;" width="11" height="8" viewBox="0 0 11 8" fill="none"><path d="M0 .8h11M0 3.900h11M0 7h11" stroke="#c2c7cf" stroke-width="1.300"/></svg>
<span class="t" style="left:256.13px;top:286.00px;font-size:11px;line-height:11px;color:#5f6b7a;letter-spacing:0.223px;">Rundfahrt</span>
<span class="t" style="left:521.64px;top:286.00px;font-size:11px;line-height:11px;color:#5f6b7a;letter-spacing:0.081px;">27. September 2024, 13:54</span>
<div style="left:686px;top:280.3px;width:62px;height:15.2px;background:#e8eaed;border-radius:8px;"></div>
<span class="t" style="left:693.08px;top:284.00px;font-size:9px;line-height:9px;color:#727b87;font-weight:700;letter-spacing:0.145px;">Keine Frist</span>
<svg style="left:934px;top:283.8px" width="17.2" height="17.2" viewBox="0 0 17 17"><g clip-path="url(#cc)"><g filter="url(#bl)"><rect x="-2" y="-2" width="21" height="21" fill="#3d261d"/><path d="M12 -1h7v10.500l-2.500.5C16 6.500 14.500 3 12 1z" fill="#74a63c"/><ellipse cx="7.400" cy="9.700" rx="5.300" ry="7" fill="#efc5b0"/><path d="M1 8.500C.8 3.500 3.500.7 8 .7c4.500 0 6.700 2.800 6.400 8-1.200-1.700-2.200-3.400-2.800-5C9.500 4.400 6 4.500 3.700 4.200 2.600 5.200 1.600 6.800 1 8.500z" fill="#3f281e"/><ellipse cx="4.800" cy="10.300" rx="1.300" ry="1" fill="#e8a794" opacity=".6"/><ellipse cx="10.200" cy="10.300" rx="1.300" ry="1" fill="#e8a794" opacity=".6"/><path d="M4.600 7.500h1.900M8.500 7.500h1.900" stroke="#6b4a3e" stroke-width=".9"/><path d="M5.300 12c1.400 1 3.100 1 4.400 0-.4 1.300-1.200 1.900-2.200 1.900S5.700 13.300 5.300 12z" fill="#fbeee9"/><path d="M2 18c.8-1.500 2.500-2 5-2s3.500.5 4.500 2z" fill="#dba68c"/></g></g></svg>
<span class="t" style="left:959.74px;top:287.00px;font-size:11px;line-height:11px;color:#5f6b7a;letter-spacing:0.012px;">Emilia Schmidt</span>
<svg style="left:1079px;top:283.8px" width="17.2" height="17.2" viewBox="0 0 17 17"><g clip-path="url(#cc)"><g filter="url(#bl)"><rect x="-2" y="-2" width="21" height="21" fill="#3d261d"/><path d="M12 -1h7v10.500l-2.500.5C16 6.500 14.500 3 12 1z" fill="#74a63c"/><ellipse cx="7.400" cy="9.700" rx="5.300" ry="7" fill="#efc5b0"/><path d="M1 8.500C.8 3.500 3.500.7 8 .7c4.500 0 6.700 2.800 6.400 8-1.200-1.700-2.200-3.400-2.800-5C9.500 4.400 6 4.500 3.700 4.200 2.600 5.200 1.600 6.800 1 8.500z" fill="#3f281e"/><ellipse cx="4.800" cy="10.300" rx="1.300" ry="1" fill="#e8a794" opacity=".6"/><ellipse cx="10.200" cy="10.300" rx="1.300" ry="1" fill="#e8a794" opacity=".6"/><path d="M4.600 7.500h1.900M8.500 7.500h1.900" stroke="#6b4a3e" stroke-width=".9"/><path d="M5.300 12c1.400 1 3.100 1 4.400 0-.4 1.300-1.200 1.900-2.200 1.900S5.700 13.300 5.300 12z" fill="#fbeee9"/><path d="M2 18c.8-1.500 2.500-2 5-2s3.500.5 4.500 2z" fill="#dba68c"/></g></g></svg>
<span class="t" style="left:1104.48px;top:287.00px;font-size:11px;line-height:11px;color:#5f6b7a;letter-spacing:0.079px;">Emilia Schmidt</span>
<div style="left:213.1px;top:329.2px;width:11.2px;height:11px;border:1.150px solid #878c93;border-radius:2.600px;background:#fff;"></div>
<svg style="left:234.1px;top:331.9px;" width="11" height="8" viewBox="0 0 11 8" fill="none"><path d="M0 .8h11M0 3.900h11M0 7h11" stroke="#c2c7cf" stroke-width="1.300"/></svg>
<span class="t" style="left:256.54px;top:331.00px;font-size:11px;line-height:11px;color:#5f6b7a;letter-spacing:0.165px;">Vertrag unterschreiben</span>
<span class="t" style="left:521.88px;top:331.00px;font-size:11px;line-height:11px;color:#5f6b7a;letter-spacing:-0.003px;">3. Dezember 2024, 16:12</span>
<div style="left:686px;top:325.6px;width:62px;height:15.2px;background:#e8eaed;border-radius:8px;"></div>
<span class="t" style="left:693.08px;top:329.00px;font-size:9px;line-height:9px;color:#727b87;font-weight:700;letter-spacing:0.145px;">Keine Frist</span>
<svg style="left:934px;top:329.1px" width="17.2" height="17.2" viewBox="0 0 17 17"><g clip-path="url(#cc)"><g filter="url(#bl)"><rect x="-2" y="-2" width="21" height="21" fill="#3d261d"/><path d="M12 -1h7v10.500l-2.500.5C16 6.500 14.500 3 12 1z" fill="#74a63c"/><ellipse cx="7.400" cy="9.700" rx="5.300" ry="7" fill="#efc5b0"/><path d="M1 8.500C.8 3.500 3.500.7 8 .7c4.500 0 6.700 2.800 6.400 8-1.200-1.700-2.200-3.400-2.800-5C9.500 4.400 6 4.500 3.700 4.200 2.600 5.200 1.600 6.800 1 8.500z" fill="#3f281e"/><ellipse cx="4.800" cy="10.300" rx="1.300" ry="1" fill="#e8a794" opacity=".6"/><ellipse cx="10.200" cy="10.300" rx="1.300" ry="1" fill="#e8a794" opacity=".6"/><path d="M4.600 7.500h1.900M8.500 7.500h1.900" stroke="#6b4a3e" stroke-width=".9"/><path d="M5.300 12c1.400 1 3.100 1 4.400 0-.4 1.300-1.200 1.900-2.200 1.900S5.700 13.300 5.300 12z" fill="#fbeee9"/><path d="M2 18c.8-1.500 2.500-2 5-2s3.500.5 4.500 2z" fill="#dba68c"/></g></g></svg>
<span class="t" style="left:959.74px;top:333.00px;font-size:11px;line-height:11px;color:#5f6b7a;letter-spacing:0.012px;">Emilia Schmidt</span>
<svg style="left:1079px;top:329.1px" width="17.2" height="17.2" viewBox="0 0 17 17"><g clip-path="url(#cc)"><g filter="url(#bl)"><rect x="-2" y="-2" width="21" height="21" fill="#3d261d"/><path d="M12 -1h7v10.500l-2.500.5C16 6.500 14.500 3 12 1z" fill="#74a63c"/><ellipse cx="7.400" cy="9.700" rx="5.300" ry="7" fill="#efc5b0"/><path d="M1 8.500C.8 3.500 3.500.7 8 .7c4.500 0 6.700 2.800 6.400 8-1.200-1.700-2.200-3.400-2.800-5C9.500 4.400 6 4.500 3.700 4.200 2.600 5.200 1.600 6.800 1 8.500z" fill="#3f281e"/><ellipse cx="4.800" cy="10.300" rx="1.300" ry="1" fill="#e8a794" opacity=".6"/><ellipse cx="10.200" cy="10.300" rx="1.300" ry="1" fill="#e8a794" opacity=".6"/><path d="M4.600 7.500h1.900M8.500 7.500h1.900" stroke="#6b4a3e" stroke-width=".9"/><path d="M5.300 12c1.400 1 3.100 1 4.400 0-.4 1.300-1.200 1.900-2.200 1.900S5.700 13.300 5.300 12z" fill="#fbeee9"/><path d="M2 18c.8-1.500 2.500-2 5-2s3.500.5 4.500 2z" fill="#dba68c"/></g></g></svg>
<span class="t" style="left:1104.48px;top:333.00px;font-size:11px;line-height:11px;color:#5f6b7a;letter-spacing:0.079px;">Emilia Schmidt</span>
<div style="left:213.1px;top:376.8px;width:11.2px;height:11px;border:1.150px solid #878c93;border-radius:2.600px;background:#fff;"></div>
<svg style="left:234.1px;top:379.5px;" width="11" height="8" viewBox="0 0 11 8" fill="none"><path d="M0 .8h11M0 3.900h11M0 7h11" stroke="#c2c7cf" stroke-width="1.300"/></svg>
<span class="t" style="left:256.16px;top:379.00px;font-size:11px;line-height:11px;color:#5f6b7a;letter-spacing:0.055px;">CRM: Bericht ausfüllen</span>
<span class="t" style="left:521.88px;top:379.00px;font-size:11px;line-height:11px;color:#5f6b7a;letter-spacing:-0.010px;">3. Februar, 12:56</span>
<div style="left:686px;top:373.2px;width:62px;height:15.2px;background:#e8eaed;border-radius:8px;"></div>
<span class="t" style="left:693.08px;top:377.00px;font-size:9px;line-height:9px;color:#727b87;font-weight:700;letter-spacing:0.145px;">Keine Frist</span>
<div style="left:840.2px;top:375.9px;width:29px;height:15.6px;background:#ebedf0;border-radius:8px;"></div>
<span class="t" style="left:846.66px;top:379.00px;font-size:9.4px;line-height:9.4px;color:#6b7480;letter-spacing:0.296px;">crm</span>
<svg style="left:934px;top:376.7px" width="17.2" height="17.2" viewBox="0 0 17 17"><g clip-path="url(#cc)"><g filter="url(#bl)"><rect x="-2" y="-2" width="21" height="21" fill="#3d261d"/><path d="M12 -1h7v10.500l-2.500.5C16 6.500 14.500 3 12 1z" fill="#74a63c"/><ellipse cx="7.400" cy="9.700" rx="5.300" ry="7" fill="#efc5b0"/><path d="M1 8.500C.8 3.500 3.500.7 8 .7c4.500 0 6.700 2.800 6.400 8-1.200-1.700-2.200-3.400-2.800-5C9.500 4.400 6 4.500 3.700 4.200 2.600 5.200 1.600 6.800 1 8.500z" fill="#3f281e"/><ellipse cx="4.800" cy="10.300" rx="1.300" ry="1" fill="#e8a794" opacity=".6"/><ellipse cx="10.200" cy="10.300" rx="1.300" ry="1" fill="#e8a794" opacity=".6"/><path d="M4.600 7.500h1.900M8.500 7.500h1.900" stroke="#6b4a3e" stroke-width=".9"/><path d="M5.300 12c1.400 1 3.100 1 4.400 0-.4 1.300-1.200 1.900-2.200 1.900S5.700 13.300 5.300 12z" fill="#fbeee9"/><path d="M2 18c.8-1.500 2.500-2 5-2s3.500.5 4.500 2z" fill="#dba68c"/></g></g></svg>
<span class="t" style="left:959.74px;top:380.00px;font-size:11px;line-height:11px;color:#5f6b7a;letter-spacing:0.012px;">Emilia Schmidt</span>
<svg style="left:1079px;top:376.7px" width="17.2" height="17.2" viewBox="0 0 17 17"><g clip-path="url(#cc)"><g filter="url(#bl)"><rect x="-2" y="-2" width="21" height="21" fill="#3d261d"/><path d="M12 -1h7v10.500l-2.500.5C16 6.500 14.500 3 12 1z" fill="#74a63c"/><ellipse cx="7.400" cy="9.700" rx="5.300" ry="7" fill="#efc5b0"/><path d="M1 8.500C.8 3.500 3.500.7 8 .7c4.500 0 6.700 2.800 6.400 8-1.200-1.700-2.200-3.400-2.800-5C9.500 4.400 6 4.500 3.700 4.200 2.600 5.200 1.600 6.800 1 8.500z" fill="#3f281e"/><ellipse cx="4.800" cy="10.300" rx="1.300" ry="1" fill="#e8a794" opacity=".6"/><ellipse cx="10.200" cy="10.300" rx="1.300" ry="1" fill="#e8a794" opacity=".6"/><path d="M4.600 7.500h1.900M8.500 7.500h1.900" stroke="#6b4a3e" stroke-width=".9"/><path d="M5.300 12c1.400 1 3.100 1 4.400 0-.4 1.300-1.200 1.900-2.200 1.900S5.700 13.300 5.300 12z" fill="#fbeee9"/><path d="M2 18c.8-1.500 2.500-2 5-2s3.500.5 4.500 2z" fill="#dba68c"/></g></g></svg>
<span class="t" style="left:1104.48px;top:380.00px;font-size:11px;line-height:11px;color:#5f6b7a;letter-spacing:0.079px;">Emilia Schmidt</span>
<div style="left:213.1px;top:422.8px;width:11.2px;height:11px;border:1.150px solid #878c93;border-radius:2.600px;background:#fff;"></div>
<svg style="left:234.1px;top:425.5px;" width="11" height="8" viewBox="0 0 11 8" fill="none"><path d="M0 .8h11M0 3.900h11M0 7h11" stroke="#c2c7cf" stroke-width="1.300"/></svg>
<span class="t" style="left:256.16px;top:425.00px;font-size:11px;line-height:11px;color:#5f6b7a;letter-spacing:0.010px;">CRM: Neues Dokument</span>
<span class="t" style="left:521.88px;top:425.00px;font-size:11px;line-height:11px;color:#5f6b7a;letter-spacing:-0.055px;">3. Februar, 14:51</span>
<div style="left:686px;top:419.2px;width:126.8px;height:15.4px;background:#fff;border:1px solid #f7b63a;border-radius:8px;"></div>
<span class="t" style="left:692.82px;top:423.00px;font-size:9px;line-height:9px;color:#545d69;font-weight:700;letter-spacing:0.312px;">Muss kontrolliert werden</span>
<div style="left:840.2px;top:421.9px;width:29px;height:15.6px;background:#ebedf0;border-radius:8px;"></div>
<span class="t" style="left:846.66px;top:425.00px;font-size:9.4px;line-height:9.4px;color:#6b7480;letter-spacing:0.296px;">crm</span>
<svg style="left:934px;top:422.7px" width="17.2" height="17.2" viewBox="0 0 17 17"><g clip-path="url(#cc)"><g filter="url(#bl)"><rect x="-2" y="-2" width="21" height="21" fill="#3d261d"/><path d="M12 -1h7v10.500l-2.500.5C16 6.500 14.500 3 12 1z" fill="#74a63c"/><ellipse cx="7.400" cy="9.700" rx="5.300" ry="7" fill="#efc5b0"/><path d="M1 8.500C.8 3.500 3.500.7 8 .7c4.500 0 6.700 2.800 6.400 8-1.200-1.700-2.200-3.400-2.800-5C9.500 4.400 6 4.500 3.700 4.200 2.600 5.200 1.600 6.800 1 8.500z" fill="#3f281e"/><ellipse cx="4.800" cy="10.300" rx="1.300" ry="1" fill="#e8a794" opacity=".6"/><ellipse cx="10.200" cy="10.300" rx="1.300" ry="1" fill="#e8a794" opacity=".6"/><path d="M4.600 7.500h1.900M8.500 7.500h1.900" stroke="#6b4a3e" stroke-width=".9"/><path d="M5.300 12c1.400 1 3.100 1 4.400 0-.4 1.300-1.200 1.900-2.200 1.900S5.700 13.300 5.300 12z" fill="#fbeee9"/><path d="M2 18c.8-1.500 2.500-2 5-2s3.500.5 4.500 2z" fill="#dba68c"/></g></g></svg>
<span class="t" style="left:959.74px;top:426.00px;font-size:11px;line-height:11px;color:#5f6b7a;letter-spacing:0.012px;">Emilia Schmidt</span>
<svg style="left:1079px;top:422.7px" width="17.2" height="17.2" viewBox="0 0 17 17"><g clip-path="url(#cc)"><g filter="url(#bl)"><rect x="-2" y="-2" width="21" height="21" fill="#8f8f8f"/><ellipse cx="9" cy="10.200" rx="5.400" ry="6.800" fill="#efbaa3"/><path d="M3.500 8.500C3 3.500 5 .2 9.300.2s6.700 3 6.200 8.300c-.5-1.600-1-2.800-1.700-3.600-2.600.6-5.500.5-8.200-.4-.9 1-1.600 2.300-2.100 4z" fill="#1f1a18"/><path d="M6 8.600h2M10 8.600h2" stroke="#5d4035" stroke-width=".9"/><path d="M6.700 12.600c1.400.9 3 .9 4.400 0-.4 1.300-1.200 1.800-2.200 1.800s-1.800-.5-2.200-1.800z" fill="#f6dcd6"/></g></g></svg>
<span class="t" style="left:1104.96px;top:426.00px;font-size:11px;line-height:11px;color:#5f6b7a;letter-spacing:0.052px;">Alexander Meier</span>
<div style="left:213.1px;top:480.5px;width:11.2px;height:11px;border:1.150px solid #878c93;border-radius:2.600px;background:#fff;"></div>
<svg style="left:234.1px;top:483.2px;" width="11" height="8" viewBox="0 0 11 8" fill="none"><path d="M0 .8h11M0 3.900h11M0 7h11" stroke="#c2c7cf" stroke-width="1.300"/></svg>
<span class="t" style="left:256.16px;top:482.00px;font-size:11px;line-height:11px;color:#5f6b7a;letter-spacing:0.077px;">CRM: Vertrag</span>
<span class="t" style="left:521.88px;top:482.00px;font-size:11px;line-height:11px;color:#5f6b7a;letter-spacing:0.052px;">3. Februar, 13:56</span>
<div style="left:686px;top:476.9px;width:62px;height:15.2px;background:#e8eaed;border-radius:8px;"></div>
<span class="t" style="left:693.08px;top:481.00px;font-size:9px;line-height:9px;color:#727b87;font-weight:700;letter-spacing:0.145px;">Keine Frist</span>
<div style="left:840.2px;top:479.6px;width:29px;height:15.6px;background:#ebedf0;border-radius:8px;"></div>
<span class="t" style="left:846.66px;top:482.00px;font-size:9.4px;line-height:9.4px;color:#6b7480;letter-spacing:0.296px;">crm</span>
<svg style="left:934px;top:480.4px" width="17.2" height="17.2" viewBox="0 0 17 17"><g clip-path="url(#cc)"><g filter="url(#bl)"><rect x="-2" y="-2" width="21" height="21" fill="#3d261d"/><path d="M12 -1h7v10.500l-2.500.5C16 6.500 14.500 3 12 1z" fill="#74a63c"/><ellipse cx="7.400" cy="9.700" rx="5.300" ry="7" fill="#efc5b0"/><path d="M1 8.500C.8 3.500 3.500.7 8 .7c4.500 0 6.700 2.800 6.400 8-1.200-1.700-2.200-3.400-2.800-5C9.500 4.400 6 4.500 3.700 4.200 2.600 5.200 1.600 6.800 1 8.500z" fill="#3f281e"/><ellipse cx="4.800" cy="10.300" rx="1.300" ry="1" fill="#e8a794" opacity=".6"/><ellipse cx="10.200" cy="10.300" rx="1.300" ry="1" fill="#e8a794" opacity=".6"/><path d="M4.600 7.500h1.900M8.500 7.500h1.900" stroke="#6b4a3e" stroke-width=".9"/><path d="M5.300 12c1.400 1 3.100 1 4.400 0-.4 1.300-1.200 1.900-2.200 1.900S5.700 13.300 5.300 12z" fill="#fbeee9"/><path d="M2 18c.8-1.500 2.500-2 5-2s3.500.5 4.500 2z" fill="#dba68c"/></g></g></svg>
<span class="t" style="left:959.74px;top:484.00px;font-size:11px;line-height:11px;color:#5f6b7a;letter-spacing:0.012px;">Emilia Schmidt</span>
<svg style="left:1079px;top:480.4px" width="17.2" height="17.2" viewBox="0 0 17 17"><g clip-path="url(#cc)"><g filter="url(#bl)"><rect x="-2" y="-2" width="21" height="21" fill="#3d261d"/><path d="M12 -1h7v10.500l-2.500.5C16 6.500 14.500 3 12 1z" fill="#74a63c"/><ellipse cx="7.400" cy="9.700" rx="5.300" ry="7" fill="#efc5b0"/><path d="M1 8.500C.8 3.500 3.500.7 8 .7c4.500 0 6.700 2.800 6.400 8-1.200-1.700-2.200-3.400-2.800-5C9.500 4.400 6 4.500 3.700 4.200 2.600 5.200 1.600 6.800 1 8.500z" fill="#3f281e"/><ellipse cx="4.800" cy="10.300" rx="1.300" ry="1" fill="#e8a794" opacity=".6"/><ellipse cx="10.200" cy="10.300" rx="1.300" ry="1" fill="#e8a794" opacity=".6"/><path d="M4.600 7.500h1.900M8.500 7.500h1.900" stroke="#6b4a3e" stroke-width=".9"/><path d="M5.300 12c1.400 1 3.100 1 4.400 0-.4 1.300-1.200 1.900-2.200 1.900S5.700 13.300 5.300 12z" fill="#fbeee9"/><path d="M2 18c.8-1.500 2.500-2 5-2s3.500.5 4.500 2z" fill="#dba68c"/></g></g></svg>
<span class="t" style="left:1104.48px;top:484.00px;font-size:11px;line-height:11px;color:#5f6b7a;letter-spacing:0.079px;">Emilia Schmidt</span>
<div style="left:213.1px;top:525.8px;width:11.2px;height:11px;border:1.150px solid #878c93;border-radius:2.600px;background:#fff;"></div>
<svg style="left:234.1px;top:528.5px;" width="11" height="8" viewBox="0 0 11 8" fill="none"><path d="M0 .8h11M0 3.900h11M0 7h11" stroke="#c2c7cf" stroke-width="1.300"/></svg>
<span class="t" style="left:256.54px;top:527.00px;font-size:11px;line-height:11px;color:#5f6b7a;letter-spacing:0.213px;">Vertrag prüfen</span>
<span class="t" style="left:521.37px;top:527.00px;font-size:11px;line-height:11px;color:#5f6b7a;letter-spacing:-0.115px;">14. Februar, 10:13</span>
<div style="left:686px;top:522.2px;width:62px;height:15.2px;background:#e8eaed;border-radius:8px;"></div>
<span class="t" style="left:693.08px;top:526.00px;font-size:9px;line-height:9px;color:#727b87;font-weight:700;letter-spacing:0.145px;">Keine Frist</span>
<svg style="left:934px;top:525.7px" width="17.2" height="17.2" viewBox="0 0 17 17"><g clip-path="url(#cc)"><g filter="url(#bl)"><rect x="-2" y="-2" width="21" height="21" fill="#3d261d"/><path d="M12 -1h7v10.500l-2.500.5C16 6.500 14.500 3 12 1z" fill="#74a63c"/><ellipse cx="7.400" cy="9.700" rx="5.300" ry="7" fill="#efc5b0"/><path d="M1 8.500C.8 3.500 3.500.7 8 .7c4.500 0 6.700 2.800 6.400 8-1.200-1.700-2.200-3.400-2.800-5C9.500 4.400 6 4.500 3.700 4.200 2.600 5.200 1.600 6.800 1 8.500z" fill="#3f281e"/><ellipse cx="4.800" cy="10.300" rx="1.300" ry="1" fill="#e8a794" opacity=".6"/><ellipse cx="10.200" cy="10.300" rx="1.300" ry="1" fill="#e8a794" opacity=".6"/><path d="M4.600 7.500h1.900M8.500 7.500h1.900" stroke="#6b4a3e" stroke-width=".9"/><path d="M5.300 12c1.400 1 3.100 1 4.400 0-.4 1.300-1.200 1.900-2.200 1.900S5.700 13.300 5.300 12z" fill="#fbeee9"/><path d="M2 18c.8-1.500 2.500-2 5-2s3.500.5 4.500 2z" fill="#dba68c"/></g></g></svg>
<span class="t" style="left:959.74px;top:529.00px;font-size:11px;line-height:11px;color:#5f6b7a;letter-spacing:0.012px;">Emilia Schmidt</span>
<svg style="left:1079px;top:525.7px" width="17.2" height="17.2" viewBox="0 0 17 17"><g clip-path="url(#cc)"><g filter="url(#bl)"><rect x="-2" y="-2" width="21" height="21" fill="#3d261d"/><path d="M12 -1h7v10.500l-2.500.5C16 6.500 14.500 3 12 1z" fill="#74a63c"/><ellipse cx="7.400" cy="9.700" rx="5.300" ry="7" fill="#efc5b0"/><path d="M1 8.500C.8 3.500 3.500.7 8 .7c4.500 0 6.700 2.800 6.400 8-1.200-1.700-2.200-3.400-2.800-5C9.500 4.400 6 4.500 3.700 4.200 2.600 5.200 1.600 6.800 1 8.500z" fill="#3f281e"/><ellipse cx="4.800" cy="10.300" rx="1.300" ry="1" fill="#e8a794" opacity=".6"/><ellipse cx="10.200" cy="10.300" rx="1.300" ry="1" fill="#e8a794" opacity=".6"/><path d="M4.600 7.500h1.900M8.500 7.500h1.900" stroke="#6b4a3e" stroke-width=".9"/><path d="M5.300 12c1.400 1 3.100 1 4.400 0-.4 1.300-1.200 1.900-2.200 1.900S5.700 13.300 5.300 12z" fill="#fbeee9"/><path d="M2 18c.8-1.500 2.500-2 5-2s3.500.5 4.500 2z" fill="#dba68c"/></g></g></svg>
<span class="t" style="left:1104.48px;top:529.00px;font-size:11px;line-height:11px;color:#5f6b7a;letter-spacing:0.079px;">Emilia Schmidt</span>
<div style="left:213.1px;top:571.1px;width:11.2px;height:11px;border:1.150px solid #878c93;border-radius:2.600px;background:#fff;"></div>
<svg style="left:234.1px;top:573.8px;" width="11" height="8" viewBox="0 0 11 8" fill="none"><path d="M0 .8h11M0 3.900h11M0 7h11" stroke="#c2c7cf" stroke-width="1.300"/></svg>
<span class="t" style="left:256.56px;top:573.00px;font-size:11px;line-height:11px;color:#5f6b7a;letter-spacing:0.181px;">Angebot vorbereiten</span>
<span class="t" style="left:521.37px;top:573.00px;font-size:11px;line-height:11px;color:#5f6b7a;letter-spacing:0.130px;">15. Juli, 05:52</span>
<div style="left:686px;top:567.5px;width:126.8px;height:15.4px;background:#fff;border:1px solid #f7b63a;border-radius:8px;"></div>
<span class="t" style="left:692.82px;top:571.00px;font-size:9px;line-height:9px;color:#545d69;font-weight:700;letter-spacing:0.312px;">Muss kontrolliert werden</span>
<svg style="left:934px;top:571.0px" width="17.2" height="17.2" viewBox="0 0 17 17"><g clip-path="url(#cc)"><g filter="url(#bl)"><rect x="-2" y="-2" width="21" height="21" fill="#3d261d"/><path d="M12 -1h7v10.500l-2.500.5C16 6.500 14.500 3 12 1z" fill="#74a63c"/><ellipse cx="7.400" cy="9.700" rx="5.300" ry="7" fill="#efc5b0"/><path d="M1 8.500C.8 3.500 3.500.7 8 .7c4.500 0 6.700 2.800 6.400 8-1.200-1.700-2.200-3.400-2.800-5C9.500 4.400 6 4.500 3.700 4.200 2.600 5.200 1.600 6.800 1 8.500z" fill="#3f281e"/><ellipse cx="4.800" cy="10.300" rx="1.300" ry="1" fill="#e8a794" opacity=".6"/><ellipse cx="10.200" cy="10.300" rx="1.300" ry="1" fill="#e8a794" opacity=".6"/><path d="M4.600 7.500h1.900M8.500 7.500h1.900" stroke="#6b4a3e" stroke-width=".9"/><path d="M5.300 12c1.400 1 3.100 1 4.400 0-.4 1.300-1.200 1.900-2.200 1.900S5.700 13.300 5.300 12z" fill="#fbeee9"/><path d="M2 18c.8-1.500 2.500-2 5-2s3.500.5 4.500 2z" fill="#dba68c"/></g></g></svg>
<span class="t" style="left:959.74px;top:575.00px;font-size:11px;line-height:11px;color:#5f6b7a;letter-spacing:0.012px;">Emilia Schmidt</span>
<svg style="left:1079px;top:571.0px" width="17.2" height="17.2" viewBox="0 0 17 17"><g clip-path="url(#cc)"><g filter="url(#bl)"><rect x="-2" y="-2" width="21" height="21" fill="#8f8f8f"/><ellipse cx="9" cy="10.200" rx="5.400" ry="6.800" fill="#efbaa3"/><path d="M3.500 8.500C3 3.500 5 .2 9.300.2s6.700 3 6.200 8.300c-.5-1.600-1-2.800-1.700-3.600-2.600.6-5.500.5-8.200-.4-.9 1-1.600 2.300-2.100 4z" fill="#1f1a18"/><path d="M6 8.600h2M10 8.600h2" stroke="#5d4035" stroke-width=".9"/><path d="M6.700 12.600c1.400.9 3 .9 4.400 0-.4 1.300-1.200 1.800-2.200 1.800s-1.800-.5-2.200-1.800z" fill="#f6dcd6"/></g></g></svg>
<span class="t" style="left:1104.96px;top:575.00px;font-size:11px;line-height:11px;color:#5f6b7a;letter-spacing:0.052px;">Alexander Meier</span>
<div style="left:213.1px;top:630.0px;width:11.2px;height:11px;border:1.150px solid #878c93;border-radius:2.600px;background:#fff;"></div>
<svg style="left:234.1px;top:632.7px;" width="11" height="8" viewBox="0 0 11 8" fill="none"><path d="M0 .8h11M0 3.900h11M0 7h11" stroke="#c2c7cf" stroke-width="1.300"/></svg>
<span class="t" style="left:256.13px;top:632.00px;font-size:11px;line-height:11px;color:#5f6b7a;letter-spacing:0.166px;">Dokumentgenehmigung</span>
<span class="t" style="left:521.64px;top:632.00px;font-size:11px;line-height:11px;color:#5f6b7a;letter-spacing:0.303px;">28. April, 08:42</span>
<div style="left:686px;top:626.4px;width:62px;height:15.2px;background:#e8eaed;border-radius:8px;"></div>
<span class="t" style="left:693.08px;top:630.00px;font-size:9px;line-height:9px;color:#727b87;font-weight:700;letter-spacing:0.145px;">Keine Frist</span>
<svg style="left:934px;top:629.9px" width="17.2" height="17.2" viewBox="0 0 17 17"><g clip-path="url(#cc)"><g filter="url(#bl)"><rect x="-2" y="-2" width="21" height="21" fill="#3d261d"/><path d="M12 -1h7v10.500l-2.500.5C16 6.500 14.500 3 12 1z" fill="#74a63c"/><ellipse cx="7.400" cy="9.700" rx="5.300" ry="7" fill="#efc5b0"/><path d="M1 8.500C.8 3.500 3.500.7 8 .7c4.500 0 6.700 2.800 6.400 8-1.200-1.700-2.200-3.400-2.800-5C9.500 4.400 6 4.500 3.700 4.200 2.600 5.200 1.600 6.800 1 8.500z" fill="#3f281e"/><ellipse cx="4.800" cy="10.300" rx="1.300" ry="1" fill="#e8a794" opacity=".6"/><ellipse cx="10.200" cy="10.300" rx="1.300" ry="1" fill="#e8a794" opacity=".6"/><path d="M4.600 7.500h1.900M8.500 7.500h1.900" stroke="#6b4a3e" stroke-width=".9"/><path d="M5.300 12c1.400 1 3.100 1 4.400 0-.4 1.300-1.200 1.900-2.200 1.900S5.700 13.300 5.300 12z" fill="#fbeee9"/><path d="M2 18c.8-1.500 2.500-2 5-2s3.500.5 4.500 2z" fill="#dba68c"/></g></g></svg>
<span class="t" style="left:959.74px;top:633.00px;font-size:11px;line-height:11px;color:#5f6b7a;letter-spacing:0.012px;">Emilia Schmidt</span>
<svg style="left:1079px;top:629.9px" width="17.2" height="17.2" viewBox="0 0 17 17"><g clip-path="url(#cc)"><g filter="url(#bl)"><rect x="-2" y="-2" width="21" height="21" fill="#3d261d"/><path d="M12 -1h7v10.500l-2.500.5C16 6.500 14.500 3 12 1z" fill="#74a63c"/><ellipse cx="7.400" cy="9.700" rx="5.300" ry="7" fill="#efc5b0"/><path d="M1 8.500C.8 3.500 3.500.7 8 .7c4.500 0 6.700 2.800 6.400 8-1.200-1.700-2.200-3.400-2.800-5C9.500 4.400 6 4.500 3.700 4.200 2.600 5.200 1.600 6.800 1 8.500z" fill="#3f281e"/><ellipse cx="4.800" cy="10.300" rx="1.300" ry="1" fill="#e8a794" opacity=".6"/><ellipse cx="10.200" cy="10.300" rx="1.300" ry="1" fill="#e8a794" opacity=".6"/><path d="M4.600 7.500h1.900M8.500 7.500h1.900" stroke="#6b4a3e" stroke-width=".9"/><path d="M5.300 12c1.400 1 3.100 1 4.400 0-.4 1.300-1.200 1.900-2.200 1.900S5.700 13.300 5.300 12z" fill="#fbeee9"/><path d="M2 18c.8-1.500 2.500-2 5-2s3.500.5 4.500 2z" fill="#dba68c"/></g></g></svg>
<span class="t" style="left:1104.48px;top:633.00px;font-size:11px;line-height:11px;color:#5f6b7a;letter-spacing:0.079px;">Emilia Schmidt</span>
<div style="left:213.1px;top:666.7px;width:11.2px;height:11px;border:1.150px solid #878c93;border-radius:2.600px;background:#fff;"></div>
<svg style="left:234.1px;top:669.4px;" width="11" height="8" viewBox="0 0 11 8" fill="none"><path d="M0 .8h11M0 3.900h11M0 7h11" stroke="#c2c7cf" stroke-width="1.300"/></svg>
<span class="t" style="left:256.56px;top:668.00px;font-size:11px;line-height:11px;color:#5f6b7a;letter-spacing:-0.020px;">Aufgabe 1</span>
<span class="t" style="left:521.64px;top:668.00px;font-size:11px;line-height:11px;color:#5f6b7a;letter-spacing:0.303px;">28. April, 08:42</span>
<div style="left:686px;top:663.1px;width:62px;height:15.2px;background:#e8eaed;border-radius:8px;"></div>
<span class="t" style="left:693.08px;top:667.00px;font-size:9px;line-height:9px;color:#727b87;font-weight:700;letter-spacing:0.145px;">Keine Frist</span>
<svg style="left:934px;top:666.6px" width="17.2" height="17.2" viewBox="0 0 17 17"><g clip-path="url(#cc)"><g filter="url(#bl)"><rect x="-2" y="-2" width="21" height="21" fill="#3d261d"/><path d="M12 -1h7v10.500l-2.500.5C16 6.500 14.500 3 12 1z" fill="#74a63c"/><ellipse cx="7.400" cy="9.700" rx="5.300" ry="7" fill="#efc5b0"/><path d="M1 8.500C.8 3.500 3.500.7 8 .7c4.500 0 6.700 2.800 6.400 8-1.200-1.700-2.200-3.400-2.800-5C9.500 4.400 6 4.500 3.700 4.200 2.600 5.200 1.600 6.800 1 8.500z" fill="#3f281e"/><ellipse cx="4.800" cy="10.300" rx="1.300" ry="1" fill="#e8a794" opacity=".6"/><ellipse cx="10.200" cy="10.300" rx="1.300" ry="1" fill="#e8a794" opacity=".6"/><path d="M4.600 7.500h1.900M8.500 7.500h1.900" stroke="#6b4a3e" stroke-width=".9"/><path d="M5.300 12c1.400 1 3.100 1 4.400 0-.4 1.300-1.200 1.900-2.200 1.900S5.700 13.300 5.300 12z" fill="#fbeee9"/><path d="M2 18c.8-1.500 2.500-2 5-2s3.500.5 4.500 2z" fill="#dba68c"/></g></g></svg>
<span class="t" style="left:959.74px;top:670.00px;font-size:11px;line-height:11px;color:#5f6b7a;letter-spacing:0.012px;">Emilia Schmidt</span>
<svg style="left:1079px;top:666.6px" width="17.2" height="17.2" viewBox="0 0 17 17"><g clip-path="url(#cc)"><g filter="url(#bl)"><rect x="-2" y="-2" width="21" height="21" fill="#3d261d"/><path d="M12 -1h7v10.500l-2.500.5C16 6.500 14.500 3 12 1z" fill="#74a63c"/><ellipse cx="7.400" cy="9.700" rx="5.300" ry="7" fill="#efc5b0"/><path d="M1 8.500C.8 3.500 3.500.7 8 .7c4.500 0 6.700 2.800 6.400 8-1.200-1.700-2.200-3.400-2.800-5C9.500 4.400 6 4.500 3.700 4.200 2.600 5.200 1.600 6.800 1 8.500z" fill="#3f281e"/><ellipse cx="4.800" cy="10.300" rx="1.300" ry="1" fill="#e8a794" opacity=".6"/><ellipse cx="10.200" cy="10.300" rx="1.300" ry="1" fill="#e8a794" opacity=".6"/><path d="M4.600 7.500h1.900M8.500 7.500h1.900" stroke="#6b4a3e" stroke-width=".9"/><path d="M5.300 12c1.400 1 3.100 1 4.400 0-.4 1.300-1.200 1.900-2.200 1.900S5.700 13.300 5.300 12z" fill="#fbeee9"/><path d="M2 18c.8-1.500 2.500-2 5-2s3.500.5 4.500 2z" fill="#dba68c"/></g></g></svg>
<span class="t" style="left:1104.48px;top:670.00px;font-size:11px;line-height:11px;color:#5f6b7a;letter-spacing:0.079px;">Emilia Schmidt</span>
<div style="left:262.7px;top:202.9px;width:72.5px;height:13px;background:#d4f0fb;border-radius:7px;"></div>
<svg style="left:269.9px;top:206.6px;" width="5" height="6" viewBox="0 0 5 6" fill="none"><path d="M.2.100 4.500 2.800.2 5.500z" fill="#6cc200"/></svg>
<span class="t" style="left:278.72px;top:206.00px;font-size:8px;line-height:8px;color:#d2303c;font-weight:700;letter-spacing:0.268px;">17:26</span>
<span class="t" style="left:302.76px;top:206.00px;font-size:8px;line-height:8px;color:#d2303c;font-weight:700;">/</span>
<span class="t" style="left:306.82px;top:206.00px;font-size:8px;line-height:8px;color:#d2303c;font-weight:700;letter-spacing:0.495px;">12:00</span>
<div style="left:262.7px;top:251.1px;width:74.5px;height:13px;background:#d4f0fb;border-radius:7px;"></div>
<svg style="left:269.9px;top:254.79999999999998px;" width="5" height="6" viewBox="0 0 5 6" fill="none"><path d="M.2.100 4.500 2.800.2 5.500z" fill="#6cc200"/></svg>
<span class="t" style="left:278.99px;top:254.00px;font-size:8px;line-height:8px;color:#535d6a;font-weight:700;letter-spacing:0.567px;">02:00</span>
<span class="t" style="left:303.95px;top:254.00px;font-size:8px;line-height:8px;color:#535d6a;font-weight:700;">/</span>
<span class="t" style="left:309.40px;top:254.00px;font-size:8px;line-height:8px;color:#535d6a;font-weight:700;letter-spacing:0.365px;">14:00</span>
<div style="left:262.7px;top:344.3px;width:45.5px;height:13px;background:#d4f0fb;border-radius:7px;"></div>
<svg style="left:269.9px;top:348.0px;" width="5" height="6" viewBox="0 0 5 6" fill="none"><path d="M.2.100 4.500 2.800.2 5.500z" fill="#6cc200"/></svg>
<span class="t" style="left:278.99px;top:348.00px;font-size:8px;line-height:8px;color:#535d6a;font-weight:700;letter-spacing:0.703px;">00:00</span>
<div style="left:335.3px;top:527.2px;width:45.5px;height:13px;background:#d4f0fb;border-radius:7px;"></div>
<svg style="left:342.5px;top:530.9000000000001px;" width="5" height="6" viewBox="0 0 5 6" fill="none"><path d="M.2.100 4.500 2.800.2 5.500z" fill="#6cc200"/></svg>
<span class="t" style="left:351.13px;top:530.00px;font-size:8px;line-height:8px;color:#535d6a;font-weight:700;letter-spacing:0.807px;">00:00</span>
<svg style="left:334.3px;top:190.8px;" width="7.5" height="9" viewBox="0 0 7.5 9" fill="none"><path d="M3.900.1c.3 1.600 3.100 3 3.100 5.600 0 1.500-1 2.800-2.400 3.200.5-.5.800-1.100.8-1.700C5.400 6 4.400 5.300 3.700 4.500 3.100 5.300 2.100 6 2.100 7.200c0 .6.300 1.200.8 1.700C1.500 8.500.5 7.200.5 5.700c0-1.300.6-2.300 1.300-3 .1.800.4 1.300.9 1.600C2.600 2.800 2.900 1.200 3.900.1z" fill="#f06a0a"/></svg>
<div style="left:351px;top:190px;width:22.3px;height:12px;background:#fff;border:1px solid #e5e7ea;border-radius:6px;"></div>
<svg style="left:354.3px;top:191.7px;" width="8" height="8.5" viewBox="0 0 8 8.5" fill="none"><path d="M6.300 3.300 3.500 6.700a1.550 1.550 0 0 1-2.400-2L4.300.9a1.050 1.050 0 0 1 1.700 1.300L3.100 5.600" stroke="#8d949e" stroke-width=".85" stroke-linecap="round"/></svg>
<span class="t" style="left:362.16px;top:192.00px;font-size:7.5px;line-height:7.5px;color:#8d949e;">1</span>
<div style="left:312.2px;top:285.1px;width:33.5px;height:12.5px;background:#fff;border:1px solid #e5e7ea;border-radius:6.500px;"></div>
<svg style="left:317px;top:287.8px;" width="7.5" height="7.5" viewBox="0 0 7.5 7.5" fill="none"><path d="M6.200 3.600v1.900a1.400 1.400 0 0 1-1.400 1.400H1.900A1.400 1.400 0 0 1 .5 5.500V2.300A1.400 1.400 0 0 1 1.900.9h2.700" stroke="#9aa1ab" stroke-width=".85"/><path d="M2.100 3.600 3.400 4.900 6.900 1.100" stroke="#9aa1ab" stroke-width=".85"/></svg>
<span class="t" style="left:327.70px;top:289.00px;font-size:7.8px;line-height:7.8px;color:#7f8791;letter-spacing:0.109px;">0/3</span>
<svg style="left:445.5px;top:574px;" width="13" height="9" viewBox="0 0 13 9" fill="none"><path d="M.4 2.500h1.900L5.600.1v8.600L2.300 6.300H.4z" fill="#8f97a1"/><path d="M7.500 2.400 11.200 6.200M11.200 2.400 7.500 6.200" stroke="#8f97a1" stroke-width="1"/></svg>
<div style="left:1189.8px;top:393.5px;width:74.6px;height:74.6px;background:rgba(214,216,219,.86);border-radius:50%;clip-path:inset(0 36.200px 0 0);"></div>
<svg style="left:1207px;top:419px;" width="14" height="24" viewBox="0 0 14 24" fill="none"><path d="M2.400 2.700 11.400 11.900 2.400 21.100" stroke="#fff" stroke-width="2.900" stroke-linejoin="miter"/></svg>
<div style="left:1242.8px;top:48.7px;width:25px;height:25px;background:rgba(255,255,255,.17);border-radius:50%;"></div>
<div style="left:1242.8px;top:80.7px;width:25px;height:25px;background:rgba(255,255,255,.17);border-radius:50%;"></div>
<div style="left:1242.8px;top:113.1px;width:25px;height:25px;background:rgba(255,255,255,.17);border-radius:50%;"></div>
<svg style="left:1248.3px;top:53.5px;" width="14" height="15" viewBox="0 0 14 15" fill="none"><g stroke="rgba(255,255,255,.9)" stroke-width="1.100" stroke-linecap="round" stroke-linejoin="round"><path d="M7 1.500a4 4 0 0 0-4 4v3.300L1.800 11h10.400L11 8.800V5.500a4 4 0 0 0-4-4z"/><path d="M5.600 13.200h2.800"/></g></svg>
<svg style="left:1247.8px;top:85.7px;" width="15" height="15" viewBox="0 0 15 15" fill="none"><g stroke="rgba(255,255,255,.9)" stroke-width="1" stroke-linecap="round"><path d="M12.700 10.500A6 6 0 1 1 13.400 6"/><path d="M11 9.300A4 4 0 1 1 11.400 6.300"/><circle cx="7.500" cy="7.500" r="1.900"/><path d="M6.700 6.700 8.300 8.300"/></g></svg>
<svg style="left:1247.8px;top:118px;" width="15" height="15" viewBox="0 0 15 15" fill="none"><g stroke="rgba(255,255,255,.9)" stroke-width="1.050" stroke-linecap="round" stroke-linejoin="round"><path d="M13.300 7.500a5.800 5.800 0 1 0-2.600 4.900l2.400.9-.6-2.400a5.800 5.800 0 0 0 .8-3.400z"/><path d="M4.800 6h5M8.600 4.700 9.900 6 8.600 7.300M10.200 9.200h-5M6.400 7.900 5.100 9.200l1.300 1.300"/></g></svg>
<div style="left:1246.2px;top:151.8px;width:18.5px;height:1px;background:rgba(255,255,255,.2);"></div>
<div style="left:1236.2px;top:164px;width:38.8px;height:35.5px;background:rgba(255,255,255,.17);border-radius:5px;"></div>
<svg style="left:0;top:0" width="0" height="0"><defs><clipPath id="c24"><circle cx="12" cy="12" r="12"/></clipPath><filter id="bl2" x="-10%" y="-10%" width="120%" height="120%"><feGaussianBlur stdDeviation=".6"/></filter></defs></svg>
<svg style="left:1243.2px;top:169.8px;opacity:1" width="24.2" height="24.2" viewBox="0 0 24 24"><g clip-path="url(#c24)"><g filter="url(#bl2)"><rect x="-2" y="-2" width="28" height="28" fill="#5f82c0"/><path d="M1 26c1-3.500 4-5 11-5s10 1.500 11 5z" fill="#4460a8"/><ellipse cx="12.500" cy="13.500" rx="7" ry="9" fill="#98a3d8"/><path d="M5 12C4.200 5.500 7.500 1.500 12.500 1.500s8.500 4 7.500 10.500c-.7-2.500-1.600-4.300-2.800-5.200-3 .9-6 .8-8.800-.3C7 7.600 5.800 9.500 5 12z" fill="#36508f"/><path d="M9 18c2 1.300 5 1.300 7 0-.6 1.800-1.800 2.600-3.500 2.600S9.600 19.800 9 18z" fill="#c4cdf0"/></g></g></svg>
<div style="left:1242.8px;top:209.3px;width:25px;height:25px;background:rgba(0,0,0,0);border-radius:50%;border:1px solid rgba(150,150,250,.62);"></div>
<div style="left:1244.8px;top:211.3px;width:21px;height:21px;background:#6f63e2;border-radius:50%;background:linear-gradient(200deg,#8062e4 0%,#6a66e6 55%,#5670ea 100%);"></div>
<svg style="left:1248.8px;top:215.3px;" width="13" height="13" viewBox="0 0 13 13" fill="none"><g stroke="rgba(205,222,255,.72)" stroke-width="1" stroke-linecap="round"><path d="M10.800 9.400A5.200 5.200 0 1 1 11.300 4.600"/><path d="M9.300 8A3.300 3.300 0 1 1 9.500 5.200" stroke-width=".95"/></g><circle cx="6.400" cy="6.600" r="1.900" fill="rgba(205,222,255,.75)"/><path d="M5.500 5.700 7.300 7.500" stroke="#6f63e2" stroke-width=".8"/></svg>
<div style="left:1243.0px;top:245.1px;width:24.5px;height:24.5px;background:#4a66dc;border-radius:50%;"></div>
<svg style="left:1249.1px;top:250.9px;" width="12.4" height="12.4" viewBox="0 0 12.4 12.4" fill="none"><path fill-rule="evenodd" d="M1 0h10.400a1 1 0 0 1 1 1v10.400a1 1 0 0 1-1 1H1a1 1 0 0 1-1-1V1a1 1 0 0 1 1-1zM2.100 2.100v5.700h2.200v1.900h3.800V7.800h2.200V2.100z" fill="rgba(165,190,255,.72)"/><path d="M4.300 4.800 5.600 6.100 8.300 3.300" stroke="rgba(235,242,255,.92)" stroke-width="1.150" fill="none"/></svg>
<div style="left:1243.0px;top:280.4px;width:24.5px;height:24.5px;background:#0b8dc8;border-radius:50%;"></div>
<svg style="left:1249.1px;top:286.2px;" width="12.4" height="12.4" viewBox="0 0 12.4 12.4" fill="none"><path fill-rule="evenodd" d="M1 0h10.400a1 1 0 0 1 1 1v10.400a1 1 0 0 1-1 1H1a1 1 0 0 1-1-1V1a1 1 0 0 1 1-1zM2.100 2.100v5.700h2.200v1.900h3.800V7.800h2.200V2.100z" fill="rgba(165,190,255,.72)"/><path d="M4.300 4.800 5.600 6.100 8.300 3.300" stroke="rgba(235,242,255,.92)" stroke-width="1.150" fill="none"/></svg>
<div style="left:1243.0px;top:315.6px;width:24.5px;height:24.5px;background:#2c74e4;border-radius:50%;"></div>
<svg style="left:1249.1px;top:321.5px;" width="12.4" height="12.4" viewBox="0 0 12.4 12.4" fill="none"><path fill-rule="evenodd" d="M1 0h10.400a1 1 0 0 1 1 1v10.400a1 1 0 0 1-1 1H1a1 1 0 0 1-1-1V1a1 1 0 0 1 1-1zM2.100 2.100v5.700h2.200v1.900h3.800V7.800h2.200V2.100z" fill="rgba(165,190,255,.72)"/><path d="M4.300 4.800 5.600 6.100 8.300 3.300" stroke="rgba(235,242,255,.92)" stroke-width="1.150" fill="none"/></svg>
<div style="left:1243.0px;top:350.9px;width:24.5px;height:24.5px;background:#3c96ea;border-radius:50%;"></div>
<svg style="left:1246.8px;top:354.5px;" width="17" height="16" viewBox="0 0 17 16" fill="none"><path d="M9.500 5h5A1.500 1.500 0 0 1 16 6.500v4.300a1.500 1.500 0 0 1-1.500 1.500h-.4v1.900l-2.300-1.900H9.500" fill="#6aa8ee"/><path d="M2.500 1.500h8.700a1.500 1.500 0 0 1 1.500 1.500v5a1.500 1.500 0 0 1-1.500 1.500H6.200L3.800 11.600V9.500H2.500A1.500 1.500 0 0 1 1 8V3a1.500 1.500 0 0 1 1.500-1.500z" fill="#9cc2f0"/><path d="M3.300 4.200h6.600M3.300 6.400h5" stroke="#6db58c" stroke-width="1.100"/></svg>
<svg style="left:1243.2px;top:386.5px;opacity:1" width="24.2" height="24.2" viewBox="0 0 24 24"><g clip-path="url(#c24)"><g filter="url(#bl2)"><rect x="-2" y="-2" width="28" height="28" fill="#28356e"/><rect x="-2" y="12" width="28" height="2" fill="#4a5a96" opacity=".7"/><ellipse cx="12" cy="11.500" rx="5" ry="6.500" fill="#8088b4"/><path d="M7 9.500C6.800 5.500 9 3.500 12 3.500s5.200 2 5 6c-1.500-1.500-3-2-5-2s-3.500.5-5 2z" fill="#20284f"/><path d="M7.500 13c.5 4 2.500 6 4.500 6s4-2 4.500-6c-1.500 1.200-3 1.600-4.500 1.600S9 14.200 7.500 13z" fill="#2a3157"/><path d="M2 26c1-4 4-6 10-6s9 2 10 6z" fill="#1e2752"/></g></g></svg>
<div style="left:1242.8px;top:421.3px;width:25px;height:25px;background:rgba(0,0,0,0);border-radius:50%;border:1px solid rgba(150,150,250,.62);"></div>
<div style="left:1244.8px;top:423.3px;width:21px;height:21px;background:#6f63e2;border-radius:50%;background:linear-gradient(200deg,#8062e4 0%,#6a66e6 55%,#5670ea 100%);"></div>
<svg style="left:1248.8px;top:427.3px;" width="13" height="13" viewBox="0 0 13 13" fill="none"><g stroke="rgba(205,222,255,.72)" stroke-width="1" stroke-linecap="round"><path d="M10.800 9.400A5.200 5.200 0 1 1 11.300 4.600"/><path d="M9.300 8A3.300 3.300 0 1 1 9.500 5.200" stroke-width=".95"/></g><circle cx="6.400" cy="6.600" r="1.900" fill="rgba(205,222,255,.75)"/><path d="M5.500 5.700 7.300 7.500" stroke="#6f63e2" stroke-width=".8"/></svg>
<div style="left:1243.0px;top:456.9px;width:24.5px;height:24.5px;background:#1e8ba0;border-radius:50%;"></div>
<svg style="left:1249.1px;top:462.7px;" width="12.4" height="12.4" viewBox="0 0 12.4 12.4" fill="none"><path fill-rule="evenodd" d="M1 0h10.400a1 1 0 0 1 1 1v10.400a1 1 0 0 1-1 1H1a1 1 0 0 1-1-1V1a1 1 0 0 1 1-1zM2.100 2.100v5.700h2.200v1.900h3.800V7.800h2.200V2.100z" fill="rgba(150,180,250,.7)"/><path d="M4.300 4.800 5.600 6.100 8.300 3.300" stroke="rgba(235,242,255,.92)" stroke-width="1.150" fill="none"/></svg>
<div style="left:1243.0px;top:492.1px;width:24.5px;height:24.5px;background:#268b97;border-radius:50%;"></div>
<span class="t" style="left:1249.04px;top:501.00px;font-size:9.2px;line-height:9.2px;color:#9dbde6;letter-spacing:1.411px;">LC</span>
<div style="left:1243.0px;top:527.6px;width:24.6px;height:24.6px;background:rgba(0,0,0,0);border-radius:50%;border:1px solid rgba(130,130,240,.75);"></div>
<svg style="left:1244.8px;top:529.4px;opacity:1" width="21" height="21" viewBox="0 0 24 24"><g clip-path="url(#c24)"><g filter="url(#bl2)"><rect x="-2" y="-2" width="28" height="28" fill="#3858c0"/><path d="M14 -2h12v16l-6-2z" fill="#4aa0e0"/><path d="M-2 2 6 0 8 12-2 16z" fill="#2a3a9c"/><path d="M6.500 26C5 18 5.500 7 9 4.500c3-2 7-1 8.500 2.500 1.500 3.500 1 12 0 19z" fill="#8a6a78"/><ellipse cx="12" cy="10.500" rx="3.200" ry="4.200" fill="#b99ab8"/><path d="M6 26c.5-5 2.500-8 6.500-8s6 3 6.500 8z" fill="#b04464"/></g></g></svg>
<svg style="left:1249.7px;top:564.5px" width="12" height="12" viewBox="0 0 24 24"><g clip-path="url(#c24)"><g filter="url(#bl2)"><rect x="-2" y="-2" width="28" height="28" fill="#bfc9ec"/><ellipse cx="12" cy="13" rx="6" ry="8" fill="#a9a8d0"/><path d="M5 11C4.500 5 8 2 12 2s7.500 3 7 9c-2-3-4-4-7-4s-5 1-7 4z" fill="#2e3568"/><path d="M2 26c1-3 4-4 10-4s9 1 10 4z" fill="#d9e0f5"/></g></g></svg>
<svg style="left:1243.7px;top:575.6px" width="12" height="12" viewBox="0 0 24 24"><g clip-path="url(#c24)"><g filter="url(#bl2)"><rect x="-2" y="-2" width="28" height="28" fill="#7a5f8a"/><ellipse cx="12" cy="13" rx="5.500" ry="7.500" fill="#b9a5cc"/><path d="M4 24C3 12 6 3 12 3s9 9 8 21l-3-1c1-8 0-13-5-13s-6 5-5 13z" fill="#84506a"/></g></g></svg>
<svg style="left:1255.2px;top:575.6px" width="12" height="12" viewBox="0 0 24 24"><g clip-path="url(#c24)"><g filter="url(#bl2)"><rect x="-2" y="-2" width="28" height="28" fill="#39407a"/><ellipse cx="12" cy="13" rx="5.500" ry="7.500" fill="#a9a0c8"/><path d="M4 24C3 12 6 3 12 3s9 9 8 21l-3-1c1-8 0-13-5-13s-6 5-5 13z" fill="#272d5e"/></g></g></svg>
<div style="left:1243.0px;top:599.0px;width:24.5px;height:24.5px;background:#1c6d9c;border-radius:50%;"></div>
<svg style="left:1249.1px;top:604.8px;" width="12.4" height="12.4" viewBox="0 0 12.4 12.4" fill="none"><path fill-rule="evenodd" d="M1 0h10.400a1 1 0 0 1 1 1v10.400a1 1 0 0 1-1 1H1a1 1 0 0 1-1-1V1a1 1 0 0 1 1-1zM2.100 2.100v5.700h2.200v1.900h3.800V7.800h2.200V2.100z" fill="rgba(120,145,245,.9)"/><path d="M4.300 4.800 5.600 6.100 8.300 3.300" stroke="rgba(235,242,255,.92)" stroke-width="1.150" fill="none"/></svg>
<svg style="left:1242.3px;top:633.2px;" width="26" height="28" viewBox="0 0 26 28" fill="none"><path d="M13 1.600 23.900 7.800v12.400L13 26.400 2.100 20.200V7.800z" stroke="#157f9e" stroke-width="1" stroke-linejoin="round"/><path d="M13 4 21.700 9v10L13 24 4.300 19V9z" fill="#0b7a9e" stroke="#0b7a9e" stroke-width=".8" stroke-linejoin="round"/></svg>
<span class="t" style="left:1249.10px;top:644.00px;font-size:9.2px;line-height:9.2px;color:#7da3dc;letter-spacing:-0.192px;">OF</span>
<svg style="left:1242.3px;top:668.5px;" width="26" height="28" viewBox="0 0 26 28" fill="none"><path d="M13 1.600 23.900 7.800v12.400L13 26.400 2.100 20.200V7.800z" stroke="#157f9e" stroke-width="1" stroke-linejoin="round"/><path d="M13 4 21.700 9v10L13 24 4.300 19V9z" fill="#0b7a9e" stroke="#0b7a9e" stroke-width=".8" stroke-linejoin="round"/></svg>
<span class="t" style="left:1248.83px;top:679.00px;font-size:9.2px;line-height:9.2px;color:#7da3dc;letter-spacing:0.754px;">BO</span>
<div style="left:0px;top:636px;width:1280px;height:45px;background:linear-gradient(180deg,rgba(0,0,20,0) 0%,rgba(0,0,20,.015) 45%,rgba(0,0,20,.055) 75%,rgba(0,0,20,.15) 100%);-webkit-mask-image:linear-gradient(90deg,#000 0%,#000 78%,rgba(0,0,0,0) 97%);mask-image:linear-gradient(90deg,#000 0%,#000 78%,rgba(0,0,0,0) 97%);"></div>
</div>
</body></html>
